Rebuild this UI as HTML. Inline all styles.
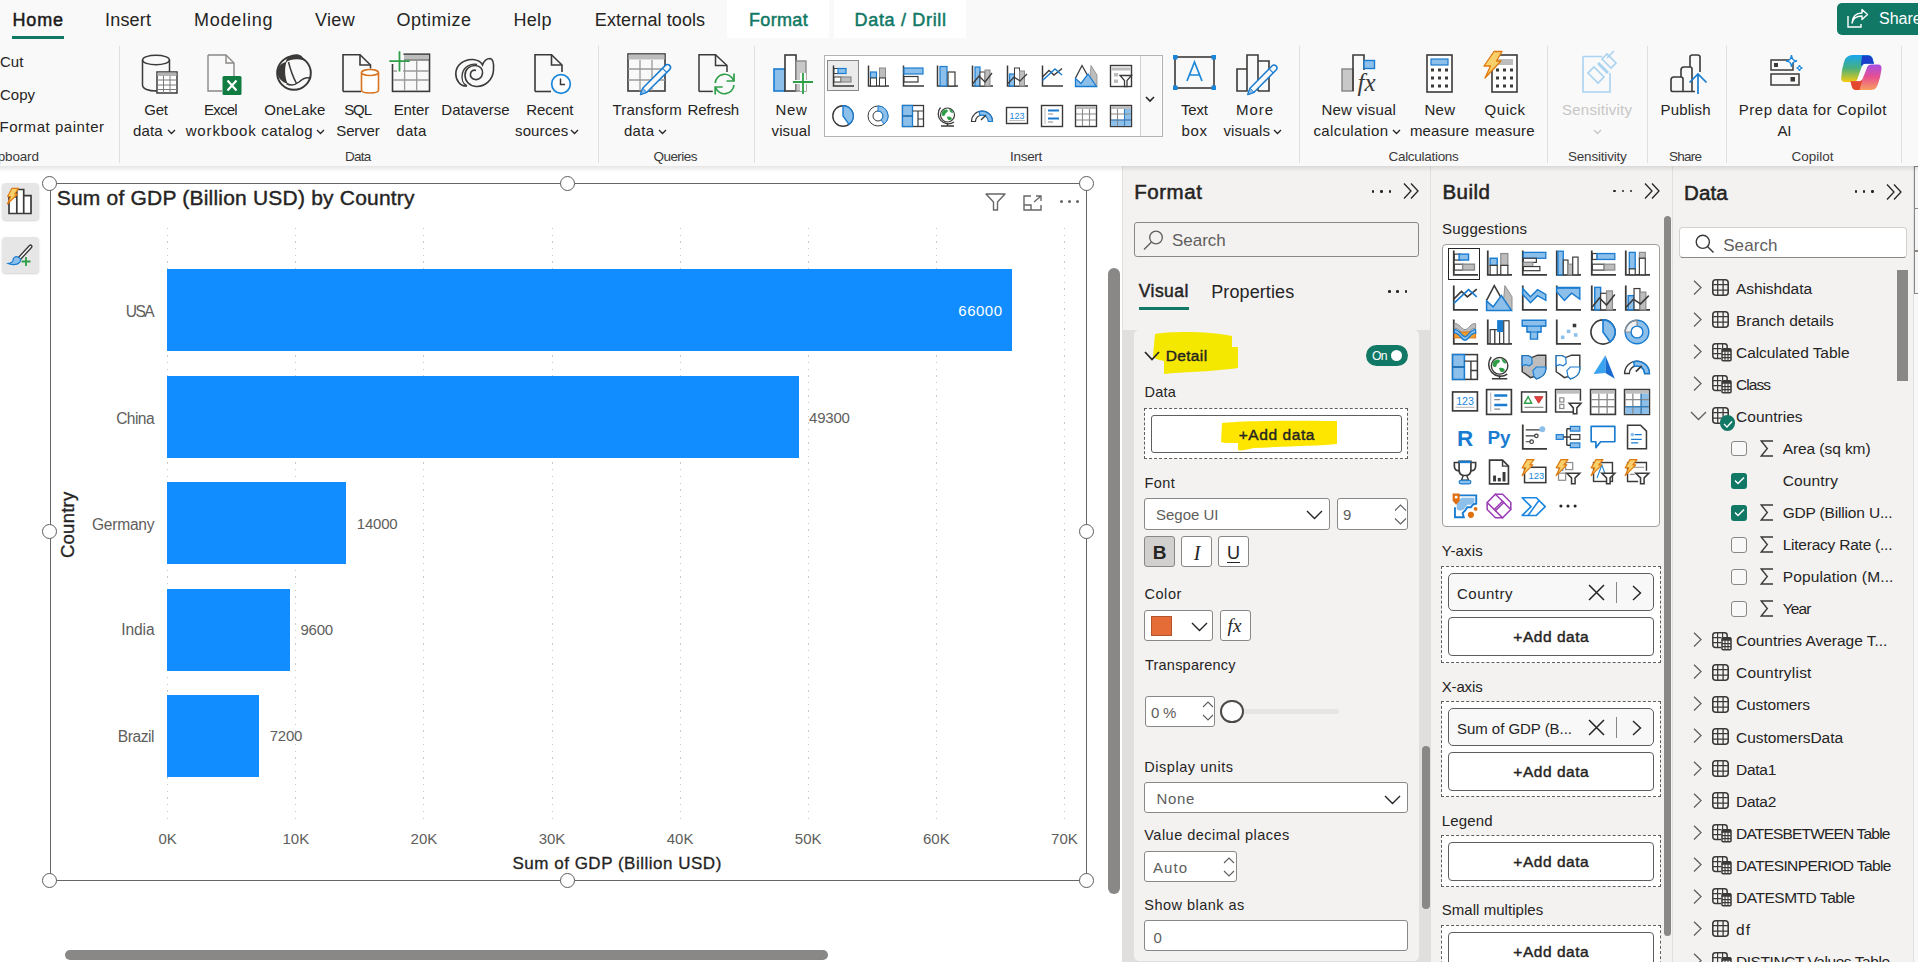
<!DOCTYPE html>
<html><head><meta charset="utf-8"><style>
html,body{margin:0;padding:0;width:1918px;height:962px;overflow:hidden;background:#fff}
body{position:relative;font-family:"Liberation Sans",sans-serif}
.a{position:absolute;box-sizing:border-box}
.t{position:absolute;white-space:nowrap;line-height:1}
svg.a{overflow:visible}
</style></head><body>
<div class="a" style="left:0.00px;top:0.00px;width:1918.00px;height:166.00px;background:#f9f9f9"></div>
<div class="a" style="left:0.00px;top:166.00px;width:1122.00px;height:796.00px;background:#ffffff"></div>
<div class="a" style="left:727.00px;top:0.00px;width:102.00px;height:38.00px;background:#ffffff"></div>
<div class="a" style="left:834.00px;top:0.00px;width:132.00px;height:38.00px;background:#ffffff"></div>
<div class="t" style="left:12.50px;top:10.66px;font-size:18.00px;color:#1b1a19;-webkit-text-stroke:0.49px #1b1a19;letter-spacing:0.829px">Home</div>
<div class="a" style="left:12.00px;top:36.00px;width:51.50px;height:2.50px;background:#117865"></div>
<div class="t" style="left:105.00px;top:10.66px;font-size:18.00px;color:#252423;letter-spacing:0.197px">Insert</div>
<div class="t" style="left:194.00px;top:10.66px;font-size:18.00px;color:#252423;letter-spacing:0.780px">Modeling</div>
<div class="t" style="left:315.00px;top:10.66px;font-size:18.00px;color:#252423;letter-spacing:0.337px">View</div>
<div class="t" style="left:396.50px;top:10.66px;font-size:18.00px;color:#252423;letter-spacing:0.484px">Optimize</div>
<div class="t" style="left:513.50px;top:10.66px;font-size:18.00px;color:#252423;letter-spacing:0.294px">Help</div>
<div class="t" style="left:594.80px;top:10.66px;font-size:18.00px;color:#252423;letter-spacing:0.096px">External tools</div>
<div class="t" style="left:749.00px;top:10.66px;font-size:18.00px;color:#117865;-webkit-text-stroke:0.49px #117865;letter-spacing:0.340px">Format</div>
<div class="t" style="left:854.60px;top:10.66px;font-size:18.00px;color:#117865;-webkit-text-stroke:0.49px #117865;letter-spacing:0.672px">Data / Drill</div>
<div class="a" style="left:1837.00px;top:3.00px;width:90.00px;height:32.00px;background:#117865;border-radius:5px"></div>
<svg class="a" style="left:1846.00px;top:8.00px" width="24" height="22" viewBox="0 0 24 22"><path d="M2 8 V19 H15 V16" fill="none" stroke="#fff" stroke-width="1.4"/><path d="M6 15 C7 10 11 8 16 8 V11.5 L21.5 6.5 L16 1.5 V5 C10 5 6.5 9 6 15Z" fill="none" stroke="#fff" stroke-width="1.4" stroke-linejoin="round"/></svg>
<div class="t" style="left:1879.00px;top:11.36px;font-size:16.00px;color:#ffffff">Share</div>
<div class="t" style="left:0.00px;top:54.00px;font-size:15.00px;color:#252423">Cut</div>
<div class="t" style="left:0.00px;top:87.00px;font-size:15.00px;color:#252423">Copy</div>
<div class="t" style="left:-0.50px;top:119.00px;font-size:15.00px;color:#252423;letter-spacing:0.536px">Format painter</div>
<div class="t" style="left:-2.30px;top:149.57px;font-size:13.50px;color:#3b3a39;letter-spacing:-0.166px">pboard</div>
<div class="a" style="left:118.50px;top:46.00px;width:1.00px;height:117.00px;background:#e1dfdd"></div>
<div class="a" style="left:598.30px;top:46.00px;width:1.00px;height:117.00px;background:#e1dfdd"></div>
<div class="a" style="left:753.60px;top:46.00px;width:1.00px;height:117.00px;background:#e1dfdd"></div>
<div class="a" style="left:1298.50px;top:46.00px;width:1.00px;height:117.00px;background:#e1dfdd"></div>
<div class="a" style="left:1547.40px;top:46.00px;width:1.00px;height:117.00px;background:#e1dfdd"></div>
<div class="a" style="left:1646.50px;top:46.00px;width:1.00px;height:117.00px;background:#e1dfdd"></div>
<div class="a" style="left:1725.50px;top:46.00px;width:1.00px;height:117.00px;background:#e1dfdd"></div>
<div class="a" style="left:1900.50px;top:46.00px;width:1.00px;height:117.00px;background:#e1dfdd"></div>
<div class="t" style="left:144.30px;top:101.80px;font-size:15.00px;color:#252423;letter-spacing:-0.238px">Get</div>
<div class="t" style="left:133.00px;top:123.10px;font-size:15.00px;color:#252423;letter-spacing:0.170px">data</div>
<svg class="a" style="left:166.50px;top:129.00px" width="9" height="6" viewBox="0 0 9 6"><path d="M1 1 L4.5 4.5 L8 1" fill="none" stroke="#252423" stroke-width="1.3"/></svg>
<div class="t" style="left:203.90px;top:101.80px;font-size:15.00px;color:#252423;letter-spacing:-0.720px">Excel</div>
<div class="t" style="left:185.70px;top:123.10px;font-size:15.00px;color:#252423;letter-spacing:0.844px">workbook</div>
<div class="t" style="left:264.30px;top:101.80px;font-size:15.00px;color:#252423;letter-spacing:0.021px">OneLake</div>
<div class="t" style="left:261.20px;top:123.10px;font-size:15.00px;color:#252423;letter-spacing:0.522px">catalog</div>
<svg class="a" style="left:316.00px;top:129.00px" width="9" height="6" viewBox="0 0 9 6"><path d="M1 1 L4.5 4.5 L8 1" fill="none" stroke="#252423" stroke-width="1.3"/></svg>
<div class="t" style="left:344.20px;top:101.80px;font-size:15.00px;color:#252423;letter-spacing:-1.107px">SQL</div>
<div class="t" style="left:336.30px;top:123.10px;font-size:15.00px;color:#252423;letter-spacing:-0.155px">Server</div>
<div class="t" style="left:393.70px;top:101.80px;font-size:15.00px;color:#252423;letter-spacing:-0.088px">Enter</div>
<div class="t" style="left:396.30px;top:123.10px;font-size:15.00px;color:#252423;letter-spacing:0.270px">data</div>
<div class="t" style="left:441.30px;top:101.80px;font-size:15.00px;color:#252423">Dataverse</div>
<div class="t" style="left:526.30px;top:101.80px;font-size:15.00px;color:#252423;letter-spacing:-0.105px">Recent</div>
<div class="t" style="left:515.00px;top:123.10px;font-size:15.00px;color:#252423;letter-spacing:0.130px">sources</div>
<svg class="a" style="left:570.00px;top:129.00px" width="9" height="6" viewBox="0 0 9 6"><path d="M1 1 L4.5 4.5 L8 1" fill="none" stroke="#252423" stroke-width="1.3"/></svg>
<div class="t" style="left:345.00px;top:149.57px;font-size:13.50px;color:#3b3a39;letter-spacing:-0.738px">Data</div>
<div class="t" style="left:612.40px;top:101.80px;font-size:15.00px;color:#252423;letter-spacing:0.202px">Transform</div>
<div class="t" style="left:624.00px;top:123.10px;font-size:15.00px;color:#252423;letter-spacing:0.270px">data</div>
<svg class="a" style="left:657.50px;top:129.00px" width="9" height="6" viewBox="0 0 9 6"><path d="M1 1 L4.5 4.5 L8 1" fill="none" stroke="#252423" stroke-width="1.3"/></svg>
<div class="t" style="left:687.60px;top:101.80px;font-size:15.00px;color:#252423;letter-spacing:-0.153px">Refresh</div>
<div class="t" style="left:653.40px;top:149.57px;font-size:13.50px;color:#3b3a39;letter-spacing:-0.511px">Queries</div>
<div class="t" style="left:775.50px;top:101.80px;font-size:15.00px;color:#252423;letter-spacing:0.646px">New</div>
<div class="t" style="left:771.50px;top:123.10px;font-size:15.00px;color:#252423;letter-spacing:0.130px">visual</div>
<div class="t" style="left:1010.00px;top:149.57px;font-size:13.50px;color:#3b3a39;letter-spacing:-0.292px">Insert</div>
<div class="t" style="left:1181.00px;top:101.80px;font-size:15.00px;color:#252423;letter-spacing:-0.170px">Text</div>
<div class="t" style="left:1181.60px;top:123.10px;font-size:15.00px;color:#252423;letter-spacing:0.609px">box</div>
<div class="t" style="left:1236.00px;top:101.80px;font-size:15.00px;color:#252423;letter-spacing:0.943px">More</div>
<div class="t" style="left:1223.50px;top:123.10px;font-size:15.00px;color:#252423;letter-spacing:0.109px">visuals</div>
<svg class="a" style="left:1273.00px;top:129.00px" width="9" height="6" viewBox="0 0 9 6"><path d="M1 1 L4.5 4.5 L8 1" fill="none" stroke="#252423" stroke-width="1.3"/></svg>
<div class="t" style="left:1321.50px;top:101.80px;font-size:15.00px;color:#252423;letter-spacing:0.197px">New visual</div>
<div class="t" style="left:1313.50px;top:123.10px;font-size:15.00px;color:#252423;letter-spacing:0.363px">calculation</div>
<svg class="a" style="left:1391.50px;top:129.00px" width="9" height="6" viewBox="0 0 9 6"><path d="M1 1 L4.5 4.5 L8 1" fill="none" stroke="#252423" stroke-width="1.3"/></svg>
<div class="t" style="left:1424.50px;top:101.80px;font-size:15.00px;color:#252423;letter-spacing:0.246px">New</div>
<div class="t" style="left:1410.00px;top:123.10px;font-size:15.00px;color:#252423;letter-spacing:0.108px">measure</div>
<div class="t" style="left:1484.60px;top:101.80px;font-size:15.00px;color:#252423;letter-spacing:0.515px">Quick</div>
<div class="t" style="left:1475.00px;top:123.10px;font-size:15.00px;color:#252423;letter-spacing:0.191px">measure</div>
<div class="t" style="left:1388.50px;top:149.57px;font-size:13.50px;color:#3b3a39;letter-spacing:-0.294px">Calculations</div>
<div class="t" style="left:1562.00px;top:101.80px;font-size:15.00px;color:#c8c6c4;letter-spacing:0.248px">Sensitivity</div>
<svg class="a" style="left:1592.50px;top:129.00px" width="9" height="6" viewBox="0 0 9 6"><path d="M1 1 L4.5 4.5 L8 1" fill="none" stroke="#c8c6c4" stroke-width="1.3"/></svg>
<div class="t" style="left:1568.00px;top:149.57px;font-size:13.50px;color:#3b3a39;letter-spacing:-0.197px">Sensitivity</div>
<div class="t" style="left:1660.60px;top:101.80px;font-size:15.00px;color:#252423;letter-spacing:0.117px">Publish</div>
<div class="t" style="left:1669.00px;top:149.57px;font-size:13.50px;color:#3b3a39;letter-spacing:-0.755px">Share</div>
<div class="t" style="left:1738.80px;top:101.80px;font-size:15.00px;color:#252423;letter-spacing:0.507px">Prep data for Copilot</div>
<div class="t" style="left:1777.50px;top:123.10px;font-size:15.00px;color:#252423;letter-spacing:-0.173px">AI</div>
<div class="t" style="left:1791.50px;top:149.57px;font-size:13.50px;color:#3b3a39">Copilot</div>
<div class="a" style="left:1913.00px;top:166.00px;width:5.00px;height:796.00px;background:#f8f8f8;border-left:1px solid #e1dfdd"></div>
<div class="a" style="left:1913.80px;top:166.20px;width:5.00px;height:43.00px;border:1.6px solid #8a8886;border-right:none;background:#f5f5f5"></div>
<div class="a" style="left:1913.80px;top:208.40px;width:5.00px;height:43.00px;border:1.6px solid #8a8886;border-right:none;background:#f5f5f5"></div>
<div class="a" style="left:1913.80px;top:251.30px;width:5.00px;height:43.00px;border:1.6px solid #8a8886;border-right:none;background:#f5f5f5"></div>
<svg class="a" style="left:141.00px;top:54.00px" width="37" height="41" viewBox="0 0 37 41"><path d="M1.5 6 V31 C1.5 35 8 37 15 37 L15 36" fill="none" stroke="#3b3a39" stroke-width="1.5"/><ellipse cx="15" cy="6" rx="13.5" ry="4.8" fill="none" stroke="#3b3a39" stroke-width="1.5"/><path d="M28.5 6 V18" fill="none" stroke="#3b3a39" stroke-width="1.5"/><rect x="16" y="18" width="20" height="21" fill="#fff" stroke="#3b3a39" stroke-width="1.5"/><rect x="16.5" y="18.5" width="19" height="3.5" fill="#b3b3b3"/><path d="M16 26 H36 M16 31 H36 M16 35.5 H36 M22.5 22 V39 M29 22 V39" stroke="#7a7a7a" stroke-width="1"/></svg>
<svg class="a" style="left:207.00px;top:54.00px" width="36" height="41" viewBox="0 0 36 41"><path d="M1 1 H19 L27 9 V23" fill="none" stroke="#8a8886" stroke-width="1.4"/><path d="M1 1 V37 H15" fill="none" stroke="#8a8886" stroke-width="1.4"/><path d="M19 1 V9 H27" fill="none" stroke="#8a8886" stroke-width="1.4"/><rect x="15.5" y="22" width="19" height="19" rx="1.5" fill="#107c41"/><path d="M20.5 26.5 L29.5 36.5 M29.5 26.5 L20.5 36.5" stroke="#fff" stroke-width="2.2"/></svg>
<svg class="a" style="left:276.00px;top:54.00px" width="37" height="38" viewBox="0 0 37 38"><circle cx="18" cy="19" r="16.8" fill="none" stroke="#3b3a39" stroke-width="2"/><path d="M9.5 8.5 C11 3 15 0.3 20 0.3 C24.5 0.3 27 2.5 27.8 6.5 C22 4.5 14.5 5 9.5 8.5 Z" fill="#3b3a39"/><path d="M1.5 17 C2.5 12 6 8.5 10.5 8 C8.5 14 8.5 22 11.5 29.5 C6 28.5 2 24 1.5 19 Z" fill="#3b3a39"/><path d="M12.5 8 C14.5 16 17 23 20.5 29.5" fill="none" stroke="#3b3a39" stroke-width="1.5"/><path d="M10.5 29.5 C14 31.5 18.5 31.5 23 28 C27 24.5 30.5 22.5 35 24.5" fill="none" stroke="#3b3a39" stroke-width="1.5"/></svg>
<svg class="a" style="left:342.00px;top:54.00px" width="39" height="41" viewBox="0 0 39 41"><path d="M1 37.5 V0.8 H18 L28.5 11 V14.5" fill="none" stroke="#3b3a39" stroke-width="1.6"/><path d="M18 0.8 V11 H28.5" fill="none" stroke="#3b3a39" stroke-width="1.6"/><path d="M1 37.5 H19" fill="none" stroke="#3b3a39" stroke-width="1.6"/><path d="M19.5 18.5 V36 C19.5 40 36.5 40 36.5 36 V18.5" fill="#fff" stroke="#d9741e" stroke-width="1.6"/><ellipse cx="28" cy="18.5" rx="8.5" ry="3" fill="#fff" stroke="#d9741e" stroke-width="1.6"/></svg>
<svg class="a" style="left:389.00px;top:51.00px" width="42" height="44" viewBox="0 0 42 44"><rect x="3.5" y="3.2" width="37" height="37.2" fill="none" stroke="#3b3a39" stroke-width="1.6"/><rect x="15" y="3.8" width="24.8" height="4.5" fill="#bdbdbd"/><path d="M15 9 H40" stroke="#3b3a39" stroke-width="1"/><path d="M4 20 H40 M4 29 H40 M15.6 9 V40 M27.7 9 V40" stroke="#9a9a9a" stroke-width="1.3"/><rect x="0" y="0" width="14.5" height="13" fill="#f9f9f9"/><rect x="8" y="0" width="6" height="21" fill="#f9f9f9"/><path d="M10.5 0.2 V20.6 M0.3 10.2 H20.7" stroke="#2e9e47" stroke-width="1.8"/></svg>
<svg class="a" style="left:455.00px;top:57.00px" width="40" height="31" viewBox="0 0 40 31"><path d="M12 29 C5 29.5 0.8 23 0.8 17 C0.8 8 9 2 18 2.5 C23 3 26 5 27.5 8 C29 4 32 1.5 35 1.5 C38 2 39 7 38.5 13 C38 23 30 30 21 29.5 C14 29 10 24 10 18 C10 12 15 8.5 20 8.5 C25 8.5 28 12 27.5 16.5 C27 21 23 23 20 22.5 C16.5 22 15 19 15.5 16.5 C16 13.5 19 12.5 21 13.5" fill="none" stroke="#3b3a39" stroke-width="1.6"/><path d="M12 29 C8 27 6 22 7.5 16 C9 10 16 6 22 7.5" fill="none" stroke="#3b3a39" stroke-width="1.4"/></svg>
<svg class="a" style="left:534.00px;top:54.00px" width="40" height="42" viewBox="0 0 40 42"><path d="M1 37.5 V0.8 H17.5 L28 11 V18" fill="none" stroke="#3b3a39" stroke-width="1.6"/><path d="M17.5 0.8 V11 H28" fill="none" stroke="#3b3a39" stroke-width="1.6"/><path d="M1 37.5 H17" fill="none" stroke="#3b3a39" stroke-width="1.6"/><circle cx="27" cy="30" r="9.3" fill="#fff" stroke="#1a86d9" stroke-width="1.7"/><path d="M26.5 24.5 V30.5 H31" fill="none" stroke="#3b3a39" stroke-width="1.5"/></svg>
<svg class="a" style="left:627.00px;top:53.00px" width="44" height="42" viewBox="0 0 44 42"><rect x="1" y="1" width="37" height="37" fill="none" stroke="#3b3a39" stroke-width="1.6"/><rect x="1.5" y="1.5" width="36" height="5" fill="#bdbdbd"/><path d="M1 16 H38 M1 27 H38 M13 7 V38 M25 7 V38" stroke="#9a9a9a" stroke-width="1.3"/><path d="M13.5 41.5 L15.7 35.2 L38.4 12.4 A2.9 2.9 0 0 1 42.6 16.6 L19.8 39.3 Z" fill="#f9f9f9" stroke="#1a7cd1" stroke-width="1.5" stroke-linejoin="round"/><path d="M13.5 41.5 L15.7 35.2 L19.8 39.3 Z" fill="#8cc0ea" stroke="#1a7cd1" stroke-width="1"/><path d="M39.7 19.4 L35.6 15.3" stroke="#1a7cd1" stroke-width="1.1"/></svg>
<svg class="a" style="left:698.00px;top:54.00px" width="40" height="42" viewBox="0 0 40 42"><path d="M1 37.4 V0.8 H17.5 L29 11.5 V18" fill="none" stroke="#3b3a39" stroke-width="1.5"/><path d="M17.5 0.8 V11.5 H29" fill="none" stroke="#3b3a39" stroke-width="1.5"/><path d="M1 37.4 H14.8" fill="none" stroke="#3b3a39" stroke-width="1.5"/><path d="M17.2 29 A9.5 9.5 0 0 1 35.6 26.5" fill="none" stroke="#2e9e47" stroke-width="1.7"/><path d="M36 19.5 V27 H28.5" fill="none" stroke="#2e9e47" stroke-width="1.7"/><path d="M36 31 A9.5 9.5 0 0 1 17.6 33.5" fill="none" stroke="#2e9e47" stroke-width="1.7"/><path d="M17.2 40.5 V33 H24.7" fill="none" stroke="#2e9e47" stroke-width="1.7"/></svg>
<svg class="a" style="left:773.00px;top:54.00px" width="40" height="42" viewBox="0 0 40 42"><rect x="1" y="15" width="11" height="22" fill="#8cc0ea" stroke="#1a7cd1" stroke-width="1.6"/><rect x="12" y="1" width="11" height="36" fill="#fff" stroke="#3b3a39" stroke-width="1.6"/><rect x="23" y="7" width="10" height="30" fill="#c8c8c8" stroke="#8a8a8a" stroke-width="1.4"/><rect x="20" y="26" width="20" height="4" fill="#f9f9f9"/><rect x="27" y="19" width="6" height="18" fill="#f9f9f9"/><path d="M30 19 V40 M20 28 H40" stroke="#2e9e47" stroke-width="1.8"/></svg>
<div class="a" style="left:823.50px;top:54.50px;width:339.00px;height:82.00px;background:#fff;border:1.5px solid #b3b3b3"></div>
<div class="a" style="left:1140.20px;top:55.50px;width:1.00px;height:80.00px;background:#d0d0d0"></div>
<div class="a" style="left:1141.20px;top:55.50px;width:20.00px;height:80.00px;background:#f9f9f9"></div>
<svg class="a" style="left:1145.00px;top:96.00px" width="10" height="7" viewBox="0 0 10 7"><path d="M1 1 L5 5 L9 1" fill="none" stroke="#252423" stroke-width="1.6"/></svg>
<div class="a" style="left:827.00px;top:60.30px;width:32.00px;height:31.20px;background:#ebebeb;border:1.2px solid #8a8886"></div>
<svg class="a" style="left:832.00px;top:65.00px" width="22" height="22" viewBox="0 0 22 22"><path d="M1.5 0.5 V21 H22" fill="none" stroke="#3b3a39" stroke-width="1.5"/><rect x="2" y="3.5" width="5" height="5" fill="#fff" stroke="#3b3a39" stroke-width="1"/><rect x="6" y="3.5" width="8" height="5" fill="#8cc0ea" stroke="#1a7cd1" stroke-width="1.2"/><rect x="2" y="12" width="7" height="5" fill="#fff" stroke="#3b3a39" stroke-width="1"/><rect x="9" y="12" width="10" height="5" fill="#bdbdbd" stroke="#8a8a8a" stroke-width="1.2"/></svg>
<svg class="a" style="left:866.75px;top:65.00px" width="22" height="22" viewBox="0 0 22 22"><path d="M1.5 0.5 V21 H22" fill="none" stroke="#3b3a39" stroke-width="1.5"/><rect x="3.5" y="7" width="6" height="6" fill="#8cc0ea" stroke="#1a7cd1" stroke-width="1.2"/><rect x="3.5" y="13" width="6" height="8" fill="#fff" stroke="#3b3a39" stroke-width="1"/><rect x="12.5" y="3" width="6" height="10" fill="#bdbdbd" stroke="#8a8a8a" stroke-width="1"/><rect x="12.5" y="13" width="6" height="8" fill="#fff" stroke="#3b3a39" stroke-width="1"/></svg>
<svg class="a" style="left:901.50px;top:65.00px" width="22" height="22" viewBox="0 0 22 22"><path d="M1.5 0.5 V21 H22" fill="none" stroke="#3b3a39" stroke-width="1.5"/><rect x="2" y="3" width="19" height="6" fill="#8cc0ea" stroke="#1a7cd1" stroke-width="1.2"/><rect x="2" y="11.5" width="14" height="5.5" fill="#fff" stroke="#3b3a39" stroke-width="1.2"/></svg>
<svg class="a" style="left:936.25px;top:65.00px" width="22" height="22" viewBox="0 0 22 22"><path d="M1.5 0.5 V21 H22" fill="none" stroke="#3b3a39" stroke-width="1.5"/><rect x="4" y="1.5" width="7" height="19.5" fill="#8cc0ea" stroke="#1a7cd1" stroke-width="1.2"/><rect x="12" y="7" width="7" height="14" fill="#fff" stroke="#3b3a39" stroke-width="1.2"/></svg>
<svg class="a" style="left:971.00px;top:65.00px" width="22" height="22" viewBox="0 0 22 22"><path d="M1.5 0.5 V21 H22" fill="none" stroke="#3b3a39" stroke-width="1.5"/><rect x="4" y="2" width="5" height="19" fill="#8cc0ea" stroke="#1a7cd1" stroke-width="1.2"/><rect x="9" y="7" width="5" height="14" fill="#fff" stroke="#3b3a39" stroke-width="1"/><rect x="14" y="5" width="5" height="16" fill="#bdbdbd" stroke="#8a8a8a" stroke-width="1"/><path d="M1.5 19 L8 11 L14 17 L21 8" fill="none" stroke="#3b3a39" stroke-width="1.3"/></svg>
<svg class="a" style="left:1005.75px;top:65.00px" width="22" height="22" viewBox="0 0 22 22"><path d="M1.5 0.5 V21 H22" fill="none" stroke="#3b3a39" stroke-width="1.5"/><rect x="3.5" y="9" width="5" height="12" fill="#8cc0ea" stroke="#1a7cd1" stroke-width="1.2"/><rect x="8.5" y="3" width="5" height="18" fill="#fff" stroke="#3b3a39" stroke-width="1"/><rect x="13.5" y="6" width="5" height="15" fill="#bdbdbd" stroke="#8a8a8a" stroke-width="1"/><path d="M1.5 19 L8 12 L14 16 L21 9" fill="none" stroke="#3b3a39" stroke-width="1.3"/></svg>
<svg class="a" style="left:1040.50px;top:65.00px" width="22" height="22" viewBox="0 0 22 22"><path d="M1.5 0.5 V21 H22" fill="none" stroke="#3b3a39" stroke-width="1.5"/><path d="M1.5 12 L8 5.5 L13 10 L21 3.5" fill="none" stroke="#3b3a39" stroke-width="1.4"/><path d="M1.5 15.5 L14 4 L21 10" fill="none" stroke="#1a7cd1" stroke-width="1.4"/></svg>
<svg class="a" style="left:1075.25px;top:65.00px" width="22" height="22" viewBox="0 0 22 22"><path d="M0.5 13 L7 0.5 L14 13" fill="#fff" stroke="#3b3a39" stroke-width="1.3"/><path d="M16 0.5 L22 10 V21.5 H14 Z" fill="#bdbdbd" stroke="#8a8a8a" stroke-width="0.8"/><path d="M0.5 21.5 V13.5 L6 18.5 L13 9 L21.5 21.5 Z" fill="#8cc0ea" stroke="#1a7cd1" stroke-width="1.3"/></svg>
<svg class="a" style="left:1110.00px;top:65.00px" width="22" height="22" viewBox="0 0 22 22"><rect x="0.5" y="0.5" width="21" height="21" fill="#fff" stroke="#3b3a39" stroke-width="1.4"/><rect x="1.5" y="2.5" width="19" height="3" fill="#bdbdbd"/><rect x="4" y="8" width="4" height="3.5" fill="#bdbdbd"/><rect x="4" y="14.5" width="4" height="3.5" fill="#bdbdbd"/><path d="M10 10.5 H21.5 L17 15.5 V21.5 H14.5 V15.5 Z" fill="#fff" stroke="#3b3a39" stroke-width="1.3"/></svg>
<svg class="a" style="left:832.00px;top:104.50px" width="22" height="22" viewBox="0 0 22 22"><circle cx="11" cy="11" r="10.2" fill="#fff" stroke="#3b3a39" stroke-width="1.4"/><path d="M11 0.8 A10.2 10.2 0 0 1 17 19.3 L11 11 Z" fill="#8cc0ea" stroke="#1a7cd1" stroke-width="1.4"/></svg>
<svg class="a" style="left:866.75px;top:104.50px" width="22" height="22" viewBox="0 0 22 22"><circle cx="11" cy="11" r="10" fill="none" stroke="#3b3a39" stroke-width="1"/><circle cx="11" cy="11" r="5" fill="none" stroke="#3b3a39" stroke-width="1"/><path d="M11 1 A10 10 0 0 1 17 19 L14 15 A5 5 0 0 0 11 6 Z" fill="#8cc0ea" stroke="#1a7cd1" stroke-width="1"/></svg>
<svg class="a" style="left:901.50px;top:104.50px" width="22" height="22" viewBox="0 0 22 22"><rect x="0.5" y="0.5" width="21" height="21" fill="#fff" stroke="#3b3a39" stroke-width="1.3"/><rect x="0.5" y="0.5" width="10" height="21" fill="#8cc0ea" stroke="#1a7cd1" stroke-width="1.3"/><path d="M0.5 11 H10.5 M10.5 6 H21.5 M16 6 V21.5 M16 14 H21.5" stroke="#3b3a39" stroke-width="1.2"/><path d="M0.5 11 H10.5" stroke="#1a7cd1" stroke-width="1.3"/></svg>
<svg class="a" style="left:936.25px;top:104.50px" width="22" height="22" viewBox="0 0 22 22"><circle cx="11.5" cy="10" r="7" fill="#fff" stroke="#3b3a39" stroke-width="1.2"/><path d="M6 7 C8 4 11 4 12 6 C11 8 9 8 9 10 C8 12 6 11 5.5 9 Z M13 4 C15 4 17 6 17 8 C15 8 14 7 13 4 Z M11 12 C13 11 16 12 16 14 C14 16 12 16 11 12 Z" fill="#2e9e47"/><path d="M4.5 2.5 A10 10 0 0 0 18 17" fill="none" stroke="#3b3a39" stroke-width="1.3"/><path d="M11.5 18 V20.5 M5 21 H18" stroke="#3b3a39" stroke-width="1.3"/></svg>
<svg class="a" style="left:971.00px;top:104.50px" width="22" height="22" viewBox="0 0 22 22"><path d="M0.5 16.5 A10.5 10.5 0 0 1 21.5 16.5 H17.5 A6.5 6.5 0 0 0 4.5 16.5 Z" fill="#fff" stroke="#3b3a39" stroke-width="1.2"/><path d="M8 6.6 A10.5 10.5 0 0 1 21.5 16.5 H17.5 A6.5 6.5 0 0 0 9 10.5 Z" fill="#8cc0ea" stroke="#1a7cd1" stroke-width="1.2"/><path d="M10 15 L15 10" stroke="#3b3a39" stroke-width="1.5"/></svg>
<svg class="a" style="left:1005.75px;top:104.50px" width="22" height="22" viewBox="0 0 22 22"><rect x="0.5" y="2.5" width="21" height="16" fill="#fff" stroke="#3b3a39" stroke-width="1.4"/><text x="11" y="13.5" text-anchor="middle" font-family="Liberation Sans" font-size="9" fill="#1a86d9">123</text><path d="M3 15.5 H19" stroke="#bdbdbd" stroke-width="1"/></svg>
<svg class="a" style="left:1040.50px;top:104.50px" width="22" height="22" viewBox="0 0 22 22"><rect x="0.5" y="0.5" width="21" height="21" fill="#fff" stroke="#3b3a39" stroke-width="1.4"/><path d="M4 3 V19" stroke="#bdbdbd" stroke-width="1"/><path d="M7 5.5 H18 M7 13.5 H18" stroke="#1a7cd1" stroke-width="2"/><path d="M7 9 H12 M7 17 H12" stroke="#8a8a8a" stroke-width="1"/></svg>
<svg class="a" style="left:1075.25px;top:104.50px" width="22" height="22" viewBox="0 0 22 22"><rect x="0.5" y="0.5" width="21" height="21" fill="#fff" stroke="#3b3a39" stroke-width="1.4"/><rect x="1" y="1" width="20" height="3" fill="#bdbdbd"/><path d="M1 9 H21 M1 15 H21 M7.5 4 V21 M14.5 4 V21" stroke="#8a8a8a" stroke-width="1.1"/></svg>
<svg class="a" style="left:1110.00px;top:104.50px" width="22" height="22" viewBox="0 0 22 22"><rect x="0.5" y="0.5" width="21" height="21" fill="#fff" stroke="#3b3a39" stroke-width="1.4"/><rect x="1" y="1" width="20" height="3" fill="#bdbdbd"/><rect x="14.5" y="4" width="6.5" height="17" fill="#8cc0ea"/><rect x="1" y="15" width="20" height="6" fill="#8cc0ea"/><path d="M1 9 H21 M1 15 H21 M7.5 4 V21 M14.5 4 V21" stroke="#8a8a8a" stroke-width="1.1"/><path d="M1 15 H21 M14.5 4 V21" stroke="#1a7cd1" stroke-width="0.8"/></svg>
<svg class="a" style="left:1173.00px;top:55.00px" width="43" height="36" viewBox="0 0 43 36"><rect x="2" y="2" width="39" height="31" fill="none" stroke="#3b3a39" stroke-width="1.6"/><rect x="0" y="0" width="4.5" height="4.5" fill="#1a86d9"/><rect x="38.5" y="0" width="4.5" height="4.5" fill="#1a86d9"/><rect x="0" y="30.5" width="4.5" height="4.5" fill="#1a86d9"/><rect x="38.5" y="30.5" width="4.5" height="4.5" fill="#1a86d9"/><path d="M14 26 L21.5 7 L29 26 M16.5 20 H26.5" fill="none" stroke="#1a86d9" stroke-width="1.7"/></svg>
<svg class="a" style="left:1236.00px;top:54.00px" width="41" height="42" viewBox="0 0 41 42"><path d="M1 37 V15 H11 V37 Z M11 37 V1 H22 V37 M22 7 H33 V37 H22" fill="none" stroke="#3b3a39" stroke-width="1.6"/><path d="M11.8 40.5 L14.0 34.2 L35.9 12.0 A2.9 2.9 0 0 1 40.1 16.0 L18.1 38.3 Z" fill="#f9f9f9" stroke="#1a7cd1" stroke-width="1.5" stroke-linejoin="round"/><path d="M11.8 40.5 L14.0 34.2 L18.1 38.3 Z" fill="#8cc0ea" stroke="#1a7cd1" stroke-width="1"/><path d="M37.2 18.9 L33.1 14.8" stroke="#1a7cd1" stroke-width="1.1"/></svg>
<svg class="a" style="left:1341.00px;top:54.00px" width="38" height="41" viewBox="0 0 38 41"><rect x="1" y="15" width="11" height="22" fill="#c8c8c8" stroke="#8a8a8a" stroke-width="1.5"/><path d="M12 37 V1 H23 V16" fill="none" stroke="#3b3a39" stroke-width="1.6"/><rect x="23" y="6.5" width="10.5" height="8" fill="#8cc0ea" stroke="#1a7cd1" stroke-width="1.4"/><text x="16.5" y="37" font-family="Liberation Serif" font-style="italic" font-size="25" fill="#3b3a39">fx</text></svg>
<svg class="a" style="left:1425.50px;top:53.50px" width="27" height="39" viewBox="0 0 27 39"><rect x="1" y="1" width="25" height="37" fill="#fff" stroke="#3b3a39" stroke-width="1.6"/><rect x="5" y="5" width="17" height="6" fill="#8cc0ea" stroke="#1a7cd1" stroke-width="1.2"/><g fill="#3b3a39"><rect x="5" y="14.5" width="3" height="3"/><rect x="12" y="14.5" width="3" height="3"/><rect x="19" y="14.5" width="3" height="3"/><rect x="5" y="22.5" width="3" height="3"/><rect x="12" y="22.5" width="3" height="3"/><rect x="19" y="22.5" width="3" height="3"/><rect x="5" y="30.5" width="3" height="3"/><rect x="12" y="30.5" width="3" height="3"/><rect x="19" y="30.5" width="3" height="3"/></g></svg>
<svg class="a" style="left:1483.00px;top:51.00px" width="35" height="42" viewBox="0 0 35 42"><rect x="9" y="4" width="25" height="37" fill="#fff" stroke="#3b3a39" stroke-width="1.6"/><rect x="13" y="8" width="17" height="6" fill="#bdbdbd"/><g fill="#3b3a39"><rect x="13" y="17.5" width="3" height="3"/><rect x="20" y="17.5" width="3" height="3"/><rect x="27" y="17.5" width="3" height="3"/><rect x="13" y="25.5" width="3" height="3"/><rect x="20" y="25.5" width="3" height="3"/><rect x="27" y="25.5" width="3" height="3"/><rect x="13" y="33.5" width="3" height="3"/><rect x="20" y="33.5" width="3" height="3"/><rect x="27" y="33.5" width="3" height="3"/></g><path d="M11 0.5 H19 L13.5 10 H18 L2 27 L7.5 15 H1 Z" fill="#f7cf6b" stroke="#e07a10" stroke-width="1.3" stroke-linejoin="round"/></svg>
<svg class="a" style="left:1582.00px;top:51.00px" width="37" height="42" viewBox="0 0 37 42"><path d="M1 5.5 H20 M1 5.5 V41 H28 V22" fill="none" stroke="#a9d3f0" stroke-width="1.6"/><path d="M6 22 L16 32 L22 26 L12 16 Z" fill="none" stroke="#a9d3f0" stroke-width="1.6"/><path d="M20 8 L29 17 L34 12 L25 3 Z M25 7 L32 0" fill="none" stroke="#a9d3f0" stroke-width="1.6"/><path d="M16 12 L26 22" stroke="#a9d3f0" stroke-width="3"/></svg>
<svg class="a" style="left:1670.00px;top:54.00px" width="37" height="41" viewBox="0 0 37 41"><path d="M1 36 V26 C1 24 2 23 4 23 H11 M11 23 V16 C11 14 12 13 14 13 H20 M20 13 V3 C20 1.5 21 1 22.5 1 H27.5 C29 1 30 1.5 30 3 V18" fill="none" stroke="#3b3a39" stroke-width="1.6"/><path d="M1 36 C1 37 2 37.5 3 37.5 H25" fill="none" stroke="#3b3a39" stroke-width="1.6"/><path d="M11 23 C12.5 23 13 24 13 25 V37 M20 13 C21.5 13 22 14 22 15 V37" fill="none" stroke="#3b3a39" stroke-width="1.6"/><path d="M28 40 V20 M19.5 28.5 L28 20 L36.5 28.5" fill="none" stroke="#1a7cd1" stroke-width="1.7"/></svg>
<svg class="a" style="left:1770.00px;top:54.00px" width="34" height="33" viewBox="0 0 34 33"><rect x="1" y="6" width="22" height="10" fill="none" stroke="#3b3a39" stroke-width="1.5"/><rect x="1" y="20" width="28" height="11" fill="none" stroke="#3b3a39" stroke-width="1.5"/><rect x="4" y="9" width="4" height="4" fill="#3b3a39"/><rect x="20.5" y="23" width="4.5" height="4.5" fill="#3b3a39"/><path d="M21.5 1 C22 5 23 6.5 27 7 C23 7.5 22 9 21.5 13 C21 9 20 7.5 16 7 C20 6.5 21 5 21.5 1Z" fill="#f9f9f9" stroke="#1a86d9" stroke-width="1.3"/><path d="M29.5 11 C29.8 13 30.5 13.7 32.5 14 C30.5 14.3 29.8 15 29.5 17 C29.2 15 28.5 14.3 26.5 14 C28.5 13.7 29.2 13 29.5 11Z" fill="#f9f9f9" stroke="#1a86d9" stroke-width="1.2"/></svg>
<svg class="a" style="left:1841.00px;top:55.00px" width="42" height="36" viewBox="0 0 42 36"><defs><linearGradient id="cpa" x1="0" y1="0" x2="0" y2="1"><stop offset="0" stop-color="#16a6f2"/><stop offset="0.5" stop-color="#4bb07a"/><stop offset="1" stop-color="#f5cc10"/></linearGradient><linearGradient id="cpb" x1="0" y1="0" x2="0" y2="1"><stop offset="0" stop-color="#a64ee6"/><stop offset="0.5" stop-color="#e8508e"/><stop offset="1" stop-color="#f8a060"/></linearGradient></defs><path d="M6 2 Q8 0 12 0 H27 Q30 0 31.5 3 L33 8.8 H24 Q22 8.8 21 11 L16 25 Q15 27 12 27 H4 Q0 27 0.2 23 Q0.7 14 3 7 Q4 3 6 2 Z" fill="url(#cpa)"/><path d="M21 0.5 H27 Q30 0.3 31.5 3.5 L33 8.8 H24 Q22 8.8 21 11 L20 10 Z" fill="#1a40cc"/><path d="M35 33 Q33.5 35 30 35 H15 Q12 35 11 32 L9.5 26.3 H18.5 Q20.5 26.3 21.5 24 L26.5 11.5 Q27.5 9.4 30.5 9.4 H37 Q41 9.4 40.5 14 Q39.5 22 37 29 Q36 31.5 35 33 Z" fill="url(#cpb)"/><path d="M9.5 26.3 H18.5 Q20.5 26.3 21.5 24 L18.5 35 H15 Q12 35 11 32 Z" fill="#e4482e"/></svg>
<div class="a" style="left:1.50px;top:183.00px;width:37.00px;height:37.00px;background:#e6e6e6;border-radius:4px;box-shadow:0 1px 2px rgba(0,0,0,0.18)"></div>
<div class="a" style="left:1.50px;top:236.70px;width:37.00px;height:36.60px;background:#e6e6e6;border-radius:4px;box-shadow:0 1px 2px rgba(0,0,0,0.18)"></div>
<svg class="a" style="left:8.00px;top:188.00px" width="24" height="26" viewBox="0 0 24 26"><path d="M1 25.5 V9 H8.8 V25.5 Z M8.8 25.5 V1.5 H15.7 V25.5 M15.7 25.5 V7.6 H23 V25.5 Z M1 25.5 H23" fill="#fff" stroke="#3b3a39" stroke-width="1.7"/><path d="M3.8 0.4 H10.6 L6.6 6 H9.6 L-0.6 16 L2.6 8.5 H-0.4 Z" fill="#f7cf6b" stroke="#e07a10" stroke-width="1.1" stroke-linejoin="round"/></svg>
<svg class="a" style="left:7.00px;top:243.00px" width="26" height="24" viewBox="0 0 26 24"><path d="M11 15 L22 3 C23 2 24 2 24.5 2.5 C25 3 25 4 24 5 L13 17" fill="#fff" stroke="#3b3a39" stroke-width="1.4"/><path d="M11 14 C8 13 6 15 6 17 C6 19 5 20 1 20.5 C4 22 10 22 12 20 C14 18 14 16 13 15.5 Z" fill="#8cc0ea" stroke="#1a7cd1" stroke-width="1.2"/><path d="M19 14 V23 M14.5 18.5 H23.5" stroke="#2e9e47" stroke-width="1.8"/></svg>
<div class="a" style="left:167.20px;top:228.00px;width:1.00px;height:596.00px;background:repeating-linear-gradient(#c8c8c8 0 1.3px,transparent 1.3px 6.7px)"></div>
<div class="a" style="left:295.30px;top:228.00px;width:1.00px;height:596.00px;background:repeating-linear-gradient(#c8c8c8 0 1.3px,transparent 1.3px 6.7px)"></div>
<div class="a" style="left:423.40px;top:228.00px;width:1.00px;height:596.00px;background:repeating-linear-gradient(#c8c8c8 0 1.3px,transparent 1.3px 6.7px)"></div>
<div class="a" style="left:551.50px;top:228.00px;width:1.00px;height:596.00px;background:repeating-linear-gradient(#c8c8c8 0 1.3px,transparent 1.3px 6.7px)"></div>
<div class="a" style="left:679.60px;top:228.00px;width:1.00px;height:596.00px;background:repeating-linear-gradient(#c8c8c8 0 1.3px,transparent 1.3px 6.7px)"></div>
<div class="a" style="left:807.70px;top:228.00px;width:1.00px;height:596.00px;background:repeating-linear-gradient(#c8c8c8 0 1.3px,transparent 1.3px 6.7px)"></div>
<div class="a" style="left:935.80px;top:228.00px;width:1.00px;height:596.00px;background:repeating-linear-gradient(#c8c8c8 0 1.3px,transparent 1.3px 6.7px)"></div>
<div class="a" style="left:1063.90px;top:228.00px;width:1.00px;height:596.00px;background:repeating-linear-gradient(#c8c8c8 0 1.3px,transparent 1.3px 6.7px)"></div>
<div class="a" style="left:167.00px;top:269.00px;width:845.46px;height:82.00px;background:#118dff"></div>
<div class="t" style="left:125.80px;top:303.79px;font-size:15.60px;color:#605e5c;letter-spacing:-1.639px">USA</div>
<div class="t" style="left:958.30px;top:303.30px;font-size:15.00px;color:#ffffff;letter-spacing:0.498px">66000</div>
<div class="a" style="left:167.00px;top:375.60px;width:631.53px;height:82.00px;background:#118dff"></div>
<div class="t" style="left:116.20px;top:410.79px;font-size:15.60px;color:#605e5c;letter-spacing:-0.589px">China</div>
<div class="t" style="left:809.03px;top:410.30px;font-size:15.00px;color:#605e5c;letter-spacing:-0.209px">49300</div>
<div class="a" style="left:167.00px;top:482.00px;width:179.34px;height:82.00px;background:#118dff"></div>
<div class="t" style="left:91.90px;top:516.69px;font-size:15.60px;color:#605e5c;letter-spacing:-0.241px">Germany</div>
<div class="t" style="left:356.84px;top:516.20px;font-size:15.00px;color:#605e5c;letter-spacing:-0.209px">14000</div>
<div class="a" style="left:167.00px;top:588.60px;width:122.98px;height:82.00px;background:#118dff"></div>
<div class="t" style="left:121.20px;top:622.39px;font-size:15.60px;color:#605e5c;letter-spacing:-0.106px">India</div>
<div class="t" style="left:300.48px;top:621.90px;font-size:15.00px;color:#605e5c;letter-spacing:-0.222px">9600</div>
<div class="a" style="left:167.00px;top:695.00px;width:92.23px;height:82.00px;background:#118dff"></div>
<div class="t" style="left:117.80px;top:728.59px;font-size:15.60px;color:#605e5c;letter-spacing:-0.441px">Brazil</div>
<div class="t" style="left:269.73px;top:728.10px;font-size:15.00px;color:#605e5c;letter-spacing:-0.222px">7200</div>
<div class="t" style="left:158.53px;top:831.30px;font-size:15.00px;color:#605e5c">0K</div>
<div class="t" style="left:282.46px;top:831.30px;font-size:15.00px;color:#605e5c">10K</div>
<div class="t" style="left:410.56px;top:831.30px;font-size:15.00px;color:#605e5c">20K</div>
<div class="t" style="left:538.66px;top:831.30px;font-size:15.00px;color:#605e5c">30K</div>
<div class="t" style="left:666.76px;top:831.30px;font-size:15.00px;color:#605e5c">40K</div>
<div class="t" style="left:794.86px;top:831.30px;font-size:15.00px;color:#605e5c">50K</div>
<div class="t" style="left:922.96px;top:831.30px;font-size:15.00px;color:#605e5c">60K</div>
<div class="t" style="left:1051.06px;top:831.30px;font-size:15.00px;color:#605e5c">70K</div>
<div class="t" style="left:512.50px;top:855.01px;font-size:17.00px;color:#252423;letter-spacing:0.508px;-webkit-text-stroke:0.3px #252423">Sum of GDP (Billion USD)</div>
<div class="t" style="left:0.00px;top:-15.66px;font-size:18.50px;color:#252423;letter-spacing:0.238px;transform-origin:0 0;transform:translate(74.3px,558px) rotate(-90deg) translate(0,-15.66px);left:0;top:0;-webkit-text-stroke:0.35px #252423">Country</div>
<div class="t" style="left:56.70px;top:187.02px;font-size:21.00px;color:#252423;letter-spacing:0.204px;-webkit-text-stroke:0.4px #252423">Sum of GDP (Billion USD) by Country</div>
<div class="a" style="left:50.00px;top:183.00px;width:1037.00px;height:697.50px;border:1.3px solid #666"></div>
<div class="a" style="left:42.00px;top:175.50px;width:15.00px;height:15.00px;background:#fff;border:1.3px solid #605e5c;border-radius:50%"></div>
<div class="a" style="left:560.00px;top:175.50px;width:15.00px;height:15.00px;background:#fff;border:1.3px solid #605e5c;border-radius:50%"></div>
<div class="a" style="left:1079.00px;top:175.50px;width:15.00px;height:15.00px;background:#fff;border:1.3px solid #605e5c;border-radius:50%"></div>
<div class="a" style="left:42.00px;top:524.00px;width:15.00px;height:15.00px;background:#fff;border:1.3px solid #605e5c;border-radius:50%"></div>
<div class="a" style="left:1079.00px;top:524.00px;width:15.00px;height:15.00px;background:#fff;border:1.3px solid #605e5c;border-radius:50%"></div>
<div class="a" style="left:42.00px;top:873.00px;width:15.00px;height:15.00px;background:#fff;border:1.3px solid #605e5c;border-radius:50%"></div>
<div class="a" style="left:560.00px;top:873.00px;width:15.00px;height:15.00px;background:#fff;border:1.3px solid #605e5c;border-radius:50%"></div>
<div class="a" style="left:1079.00px;top:873.00px;width:15.00px;height:15.00px;background:#fff;border:1.3px solid #605e5c;border-radius:50%"></div>
<svg class="a" style="left:985.00px;top:192.50px" width="21" height="18" viewBox="0 0 21 18"><path d="M1 1 H20 L12.5 9 V17 H8.5 V9 Z" fill="none" stroke="#666" stroke-width="1.4" stroke-linejoin="round"/></svg>
<svg class="a" style="left:1023.00px;top:194.50px" width="19" height="16" viewBox="0 0 19 16"><path d="M8 1 H1 V15 H18 V10 M1 10 H8 V15" fill="none" stroke="#666" stroke-width="1.4"/><path d="M11 7 L18 1 M13 1 H18 V6" fill="none" stroke="#666" stroke-width="1.3"/></svg>
<div class="a" style="left:1059.70px;top:199.70px;width:3.00px;height:3.00px;background:#666;border-radius:50%"></div>
<div class="a" style="left:1068.00px;top:199.70px;width:3.00px;height:3.00px;background:#666;border-radius:50%"></div>
<div class="a" style="left:1075.90px;top:199.70px;width:3.00px;height:3.00px;background:#666;border-radius:50%"></div>
<div class="a" style="left:1108.00px;top:268.40px;width:11.50px;height:625.50px;background:#8a8886;border-radius:6px"></div>
<div class="a" style="left:64.60px;top:949.60px;width:763.00px;height:10.40px;background:#8a8886;border-radius:5px"></div>
<div class="a" style="left:1122.00px;top:166.00px;width:308.50px;height:796.00px;background:#f3f2f1;border-left:1px solid #e1dfdd"></div>
<div class="t" style="left:1134.20px;top:182.25px;font-size:20.50px;color:#252423;-webkit-text-stroke:0.55px #252423;letter-spacing:0.556px">Format</div>
<div class="a" style="left:1371.70px;top:190.20px;width:2.60px;height:2.60px;background:#252423;border-radius:50%"></div><div class="a" style="left:1380.10px;top:190.20px;width:2.60px;height:2.60px;background:#252423;border-radius:50%"></div><div class="a" style="left:1388.50px;top:190.20px;width:2.60px;height:2.60px;background:#252423;border-radius:50%"></div>
<svg class="a" style="left:1403.00px;top:183.30px" width="16" height="16" viewBox="0 0 16 16"><path d="M1 0.5 L8 8 L1 15.5 M8 0.5 L15 8 L8 15.5" fill="none" stroke="#252423" stroke-width="1.3"/></svg>
<div class="a" style="left:1133.70px;top:221.50px;width:285.00px;height:35.00px;border:1px solid #8a8886;border-radius:3px"></div>
<svg class="a" style="left:1143.00px;top:230.00px" width="21" height="20" viewBox="0 0 21 20"><circle cx="13" cy="7.5" r="6.3" fill="none" stroke="#605e5c" stroke-width="1.3"/><path d="M8.5 12 L1 19.5" stroke="#605e5c" stroke-width="1.4"/></svg>
<div class="t" style="left:1172.00px;top:232.41px;font-size:17.00px;color:#605e5c;letter-spacing:-0.032px">Search</div>
<div class="t" style="left:1138.80px;top:283.09px;font-size:17.50px;color:#252423;-webkit-text-stroke:0.47px #252423;letter-spacing:0.431px">Visual</div>
<div class="a" style="left:1139.00px;top:307.30px;width:50.00px;height:2.70px;background:#117865"></div>
<div class="t" style="left:1211.20px;top:282.66px;font-size:18.00px;color:#252423;letter-spacing:0.108px">Properties</div>
<div class="a" style="left:1388.00px;top:290.10px;width:2.60px;height:2.60px;background:#252423;border-radius:50%"></div><div class="a" style="left:1396.40px;top:290.10px;width:2.60px;height:2.60px;background:#252423;border-radius:50%"></div><div class="a" style="left:1404.80px;top:290.10px;width:2.60px;height:2.60px;background:#252423;border-radius:50%"></div>
<div class="a" style="left:1123.00px;top:329.50px;width:296.00px;height:633.00px;background:#e1dfdd"></div>
<div class="a" style="left:1133.70px;top:329.70px;width:285.40px;height:631.00px;background:#f3f2f1;border-radius:5px"></div>
<div class="a" style="left:1419.00px;top:329.50px;width:10.50px;height:633.00px;background:#e1dfdd"></div>
<div class="a" style="left:1422.00px;top:746.00px;width:7.50px;height:163.00px;background:#8a8886;border-radius:4px"></div>
<svg class="a" style="left:1150.00px;top:330.00px" width="92" height="46" viewBox="0 0 92 46"><path d="M5 4 C20 1 60 1 82 6 V17 H88 V38 C60 42 30 42 14 44 V31 C8 30 4 28 3 26 Z" fill="#f5e800"/></svg>
<svg class="a" style="left:1144.30px;top:350.90px" width="16" height="10" viewBox="0 0 16 10"><path d="M1 1 L8 8.5 L15 1" fill="none" stroke="#252423" stroke-width="1.7"/></svg>
<div class="t" style="left:1165.70px;top:347.58px;font-size:15.50px;color:#252423;-webkit-text-stroke:0.42px #252423;letter-spacing:0.355px">Detail</div>
<div class="a" style="left:1365.60px;top:344.90px;width:42.20px;height:21.10px;background:#117865;border-radius:11px"></div>
<div class="t" style="left:1372.00px;top:350.27px;font-size:12.20px;color:#fff;letter-spacing:-0.774px">On</div>
<div class="a" style="left:1391.00px;top:350.10px;width:11.00px;height:11.00px;background:#fff;border-radius:50%"></div>
<div class="t" style="left:1144.60px;top:385.43px;font-size:14.50px;color:#252423;letter-spacing:0.224px">Data</div>
<div class="a" style="left:1144.30px;top:407.80px;width:263.50px;height:51.70px;border:1px dashed #605e5c;background:#fff"></div>
<div class="a" style="left:1151.00px;top:414.60px;width:250.50px;height:38.90px;border:1.3px solid #605e5c;border-radius:3px;background:#fff"></div>
<svg class="a" style="left:1220.00px;top:420.00px" width="118" height="31" viewBox="0 0 118 31"><path d="M2 3 C30 0 80 1 117 1 V24 C100 26 70 26 34 28 C25 30 20 31 18 30 V23 C8 23 2 23 1 22 Z" fill="#ffe600"/></svg>
<div class="t" style="left:1238.70px;top:426.78px;font-size:15.50px;color:#252423;-webkit-text-stroke:0.42px #252423;letter-spacing:0.575px">+Add data</div>
<div class="t" style="left:1144.40px;top:475.53px;font-size:14.50px;color:#252423;letter-spacing:0.496px">Font</div>
<div class="a" style="left:1144.40px;top:498.30px;width:186.10px;height:31.30px;border:1px solid #8a8886;border-radius:3px;background:#fff"></div>
<div class="t" style="left:1156.00px;top:506.90px;font-size:15.00px;color:#605e5c">Segoe UI</div>
<svg class="a" style="left:1305.50px;top:509.50px" width="17" height="10" viewBox="0 0 17 10"><path d="M1 1 L8.5 8.5 L16 1" fill="none" stroke="#252423" stroke-width="1.4"/></svg>
<div class="a" style="left:1337.20px;top:498.20px;width:70.50px;height:31.40px;border:1px solid #8a8886;border-radius:3px;background:#fff"></div>
<div class="t" style="left:1342.90px;top:507.30px;font-size:15.00px;color:#605e5c">9</div>
<svg class="a" style="left:1393.50px;top:503.50px" width="13" height="21" viewBox="0 0 13 21"><path d="M1 6.5 L6.5 1 L12 6.5 M1 14.5 L6.5 20 L12 14.5" fill="none" stroke="#605e5c" stroke-width="1.1"/></svg>
<div class="a" style="left:1144.40px;top:535.70px;width:30.30px;height:31.30px;border:1px solid #8a8886;border-radius:3px;background:#d2d0ce"></div>
<div class="t" style="left:1152.64px;top:543.42px;font-size:19.00px;color:#252423;font-weight:700">B</div>
<div class="a" style="left:1180.80px;top:535.70px;width:31.50px;height:31.30px;border:1px solid #8a8886;border-radius:3px;background:#fff"></div>
<div class="t" style="left:1193.72px;top:542.57px;font-size:20.00px;color:#252423;font-family:'Liberation Serif';font-style:italic">I</div>
<div class="a" style="left:1218.30px;top:535.70px;width:30.30px;height:31.30px;border:1px solid #8a8886;border-radius:3px;background:#fff"></div>
<div class="t" style="left:1227.00px;top:543.76px;font-size:18.00px;color:#252423">U</div>
<div class="a" style="left:1227.00px;top:561.50px;width:13.00px;height:1.30px;background:#252423"></div>
<div class="t" style="left:1144.40px;top:587.43px;font-size:14.50px;color:#252423;letter-spacing:0.588px">Color</div>
<div class="a" style="left:1144.40px;top:610.00px;width:68.80px;height:31.30px;border:1px solid #8a8886;border-radius:3px;background:#fff"></div>
<div class="a" style="left:1150.50px;top:615.60px;width:21.40px;height:20.60px;background:#e66c37;border:1px solid #b5532a"></div>
<svg class="a" style="left:1190.50px;top:622.00px" width="17" height="10" viewBox="0 0 17 10"><path d="M1 1 L8.5 8.5 L16 1" fill="none" stroke="#252423" stroke-width="1.4"/></svg>
<div class="a" style="left:1219.60px;top:610.00px;width:31.00px;height:31.30px;border:1px solid #8a8886;border-radius:3px;background:#fff"></div>
<div class="t" style="left:1227.61px;top:615.92px;font-size:19.00px;color:#252423;font-family:'Liberation Serif';font-style:italic">fx</div>
<div class="t" style="left:1145.00px;top:657.73px;font-size:14.50px;color:#252423;letter-spacing:0.218px">Transparency</div>
<div class="a" style="left:1144.60px;top:696.00px;width:70.90px;height:31.20px;border:1px solid #8a8886;border-radius:3px;background:#fff"></div>
<div class="t" style="left:1150.90px;top:705.00px;font-size:15.00px;color:#605e5c;letter-spacing:-0.173px">0 %</div>
<svg class="a" style="left:1201.50px;top:701.00px" width="12" height="20" viewBox="0 0 12 20"><path d="M1 6 L6 1 L11 6 M1 14 L6 19 L11 14" fill="none" stroke="#605e5c" stroke-width="1.1"/></svg>
<div class="a" style="left:1243.00px;top:708.50px;width:96.00px;height:5.50px;background:#e6e5e4;border-radius:3px"></div>
<div class="a" style="left:1220.20px;top:699.60px;width:23.40px;height:23.40px;background:#fff;border:2.6px solid #4a4a4a;border-radius:50%"></div>
<div class="t" style="left:1144.30px;top:759.73px;font-size:14.50px;color:#252423;letter-spacing:0.542px">Display units</div>
<div class="a" style="left:1144.30px;top:781.50px;width:263.50px;height:31.30px;border:1px solid #8a8886;border-radius:3px;background:#fff"></div>
<div class="t" style="left:1156.40px;top:790.80px;font-size:15.00px;color:#605e5c;letter-spacing:0.714px">None</div>
<svg class="a" style="left:1383.50px;top:794.50px" width="17" height="10" viewBox="0 0 17 10"><path d="M1 1 L8.5 8.5 L16 1" fill="none" stroke="#252423" stroke-width="1.4"/></svg>
<div class="t" style="left:1144.30px;top:828.03px;font-size:14.50px;color:#252423;letter-spacing:0.477px">Value decimal places</div>
<div class="a" style="left:1144.30px;top:851.40px;width:92.50px;height:30.80px;border:1px solid #8a8886;border-radius:3px;background:#fff"></div>
<div class="t" style="left:1153.00px;top:859.60px;font-size:15.00px;color:#605e5c;letter-spacing:1.048px">Auto</div>
<svg class="a" style="left:1222.50px;top:856.50px" width="12" height="20" viewBox="0 0 12 20"><path d="M1 6 L6 1 L11 6 M1 14 L6 19 L11 14" fill="none" stroke="#605e5c" stroke-width="1.1"/></svg>
<div class="t" style="left:1144.30px;top:898.13px;font-size:14.50px;color:#252423;letter-spacing:0.475px">Show blank as</div>
<div class="a" style="left:1144.30px;top:920.30px;width:263.50px;height:30.90px;border:1px solid #8a8886;border-radius:3px;background:#fff"></div>
<div class="t" style="left:1153.50px;top:930.10px;font-size:15.00px;color:#605e5c">0</div>
<div class="a" style="left:1430.00px;top:166.00px;width:241.50px;height:796.00px;background:#f3f2f1;border-left:1px solid #e1dfdd"></div>
<div class="t" style="left:1442.40px;top:182.35px;font-size:20.50px;color:#252423;-webkit-text-stroke:0.55px #252423;letter-spacing:0.504px">Build</div>
<div class="a" style="left:1613.10px;top:189.90px;width:2.60px;height:2.60px;background:#252423;border-radius:50%"></div><div class="a" style="left:1621.50px;top:189.90px;width:2.60px;height:2.60px;background:#252423;border-radius:50%"></div><div class="a" style="left:1629.90px;top:189.90px;width:2.60px;height:2.60px;background:#252423;border-radius:50%"></div>
<svg class="a" style="left:1644.40px;top:183.00px" width="16" height="16" viewBox="0 0 16 16"><path d="M1 0.5 L8 8 L1 15.5 M8 0.5 L15 8 L8 15.5" fill="none" stroke="#252423" stroke-width="1.3"/></svg>
<div class="t" style="left:1442.00px;top:220.50px;font-size:15.00px;color:#252423;letter-spacing:0.245px">Suggestions</div>
<div class="a" style="left:1442.00px;top:243.60px;width:218.00px;height:283.50px;background:#fff;border:1px solid #a19f9d;border-radius:4px"></div>
<div class="a" style="left:1448.00px;top:248.00px;width:32.00px;height:32.00px;border:1.3px solid #252423"></div>
<svg class="a" style="left:1451.50px;top:249.50px" width="26" height="26" viewBox="0 0 22 22"><path d="M1.5 0.5 V21 H22" fill="none" stroke="#3b3a39" stroke-width="1.5"/><rect x="2" y="3.5" width="5" height="5" fill="#fff" stroke="#3b3a39" stroke-width="1"/><rect x="6" y="3.5" width="8" height="5" fill="#8cc0ea" stroke="#1a7cd1" stroke-width="1.2"/><rect x="2" y="12" width="7" height="5" fill="#fff" stroke="#3b3a39" stroke-width="1"/><rect x="9" y="12" width="10" height="5" fill="#bdbdbd" stroke="#8a8a8a" stroke-width="1.2"/></svg>
<svg class="a" style="left:1486.00px;top:249.50px" width="26" height="26" viewBox="0 0 22 22"><path d="M1.5 0.5 V21 H22" fill="none" stroke="#3b3a39" stroke-width="1.5"/><rect x="3.5" y="7" width="6" height="6" fill="#8cc0ea" stroke="#1a7cd1" stroke-width="1.2"/><rect x="3.5" y="13" width="6" height="8" fill="#fff" stroke="#3b3a39" stroke-width="1"/><rect x="12.5" y="3" width="6" height="10" fill="#bdbdbd" stroke="#8a8a8a" stroke-width="1"/><rect x="12.5" y="13" width="6" height="8" fill="#fff" stroke="#3b3a39" stroke-width="1"/></svg>
<svg class="a" style="left:1520.60px;top:249.50px" width="26" height="26" viewBox="0 0 22 22"><path d="M1.5 0.5 V21 H22" fill="none" stroke="#3b3a39" stroke-width="1.5"/><rect x="2" y="2" width="19" height="5" fill="#8cc0ea" stroke="#1a7cd1" stroke-width="1.1"/><rect x="2" y="7" width="11" height="3.5" fill="#fff" stroke="#3b3a39" stroke-width="1"/><rect x="2" y="10.5" width="8" height="3.5" fill="#bdbdbd" stroke="#8a8a8a" stroke-width="1"/><rect x="2" y="14" width="14" height="3.5" fill="#fff" stroke="#3b3a39" stroke-width="1"/></svg>
<svg class="a" style="left:1555.20px;top:249.50px" width="26" height="26" viewBox="0 0 22 22"><path d="M1.5 0.5 V21 H22" fill="none" stroke="#3b3a39" stroke-width="1.5"/><rect x="2.5" y="1" width="4.5" height="20" fill="#8cc0ea" stroke="#1a7cd1" stroke-width="1.1"/><rect x="7" y="8.5" width="4" height="12.5" fill="#fff" stroke="#3b3a39" stroke-width="1"/><rect x="11" y="12" width="4" height="9" fill="#bdbdbd" stroke="#8a8a8a" stroke-width="1"/><rect x="15" y="6" width="4.5" height="15" fill="#fff" stroke="#3b3a39" stroke-width="1"/></svg>
<svg class="a" style="left:1589.80px;top:249.50px" width="26" height="26" viewBox="0 0 22 22"><path d="M1.5 0.5 V21 H22" fill="none" stroke="#3b3a39" stroke-width="1.5"/><rect x="2" y="3" width="4" height="5" fill="#fff" stroke="#3b3a39" stroke-width="1"/><rect x="6" y="3" width="15" height="5" fill="#8cc0ea" stroke="#1a7cd1" stroke-width="1.1"/><rect x="2" y="12" width="10" height="5" fill="#fff" stroke="#3b3a39" stroke-width="1"/><rect x="12" y="12" width="9" height="5" fill="#bdbdbd" stroke="#8a8a8a" stroke-width="1"/></svg>
<svg class="a" style="left:1624.40px;top:249.50px" width="26" height="26" viewBox="0 0 22 22"><path d="M1.5 0.5 V21 H22" fill="none" stroke="#3b3a39" stroke-width="1.5"/><rect x="4.5" y="2" width="5" height="14" fill="#8cc0ea" stroke="#1a7cd1" stroke-width="1.1"/><rect x="4.5" y="16" width="5" height="5" fill="#fff" stroke="#3b3a39" stroke-width="1"/><rect x="13" y="2" width="5" height="5" fill="#bdbdbd" stroke="#8a8a8a" stroke-width="1"/><rect x="13" y="7" width="5" height="14" fill="#fff" stroke="#3b3a39" stroke-width="1"/></svg>
<svg class="a" style="left:1451.50px;top:284.50px" width="26" height="26" viewBox="0 0 22 22"><path d="M1.5 0.5 V21 H22" fill="none" stroke="#3b3a39" stroke-width="1.5"/><path d="M1.5 12 L8 5.5 L13 10 L21 3.5" fill="none" stroke="#3b3a39" stroke-width="1.4"/><path d="M1.5 15.5 L14 4 L21 10" fill="none" stroke="#1a7cd1" stroke-width="1.4"/></svg>
<svg class="a" style="left:1486.00px;top:284.50px" width="26" height="26" viewBox="0 0 22 22"><path d="M0.5 13 L7 0.5 L14 13" fill="#fff" stroke="#3b3a39" stroke-width="1.3"/><path d="M16 0.5 L22 10 V21.5 H14 Z" fill="#bdbdbd" stroke="#8a8a8a" stroke-width="0.8"/><path d="M0.5 21.5 V13.5 L6 18.5 L13 9 L21.5 21.5 Z" fill="#8cc0ea" stroke="#1a7cd1" stroke-width="1.3"/></svg>
<svg class="a" style="left:1520.60px;top:284.50px" width="26" height="26" viewBox="0 0 22 22"><path d="M1.5 0.5 V21 H22" fill="none" stroke="#3b3a39" stroke-width="1.5"/><path d="M1.5 3 L8 10 L14 4 L21 8 V13 L14 9 L8 15 L1.5 8 Z" fill="#8cc0ea" stroke="#1a7cd1" stroke-width="1.2"/></svg>
<svg class="a" style="left:1555.20px;top:284.50px" width="26" height="26" viewBox="0 0 22 22"><path d="M1.5 0.5 V21 H22" fill="none" stroke="#3b3a39" stroke-width="1.5"/><path d="M1.5 2 H21 V12 L14 7 L8 13 L1.5 6 Z" fill="#8cc0ea" stroke="#1a7cd1" stroke-width="1.2"/><path d="M1.5 2.5 H21" stroke="#1a7cd1" stroke-width="1.5"/></svg>
<svg class="a" style="left:1589.80px;top:284.50px" width="26" height="26" viewBox="0 0 22 22"><path d="M1.5 0.5 V21 H22" fill="none" stroke="#3b3a39" stroke-width="1.5"/><rect x="4" y="2" width="5" height="19" fill="#8cc0ea" stroke="#1a7cd1" stroke-width="1.2"/><rect x="9" y="7" width="5" height="14" fill="#fff" stroke="#3b3a39" stroke-width="1"/><rect x="14" y="5" width="5" height="16" fill="#bdbdbd" stroke="#8a8a8a" stroke-width="1"/><path d="M1.5 19 L8 11 L14 17 L21 8" fill="none" stroke="#3b3a39" stroke-width="1.3"/></svg>
<svg class="a" style="left:1624.40px;top:284.50px" width="26" height="26" viewBox="0 0 22 22"><path d="M1.5 0.5 V21 H22" fill="none" stroke="#3b3a39" stroke-width="1.5"/><rect x="3.5" y="9" width="5" height="12" fill="#8cc0ea" stroke="#1a7cd1" stroke-width="1.2"/><rect x="8.5" y="3" width="5" height="18" fill="#fff" stroke="#3b3a39" stroke-width="1"/><rect x="13.5" y="6" width="5" height="15" fill="#bdbdbd" stroke="#8a8a8a" stroke-width="1"/><path d="M1.5 19 L8 12 L14 16 L21 9" fill="none" stroke="#3b3a39" stroke-width="1.3"/></svg>
<svg class="a" style="left:1451.50px;top:319.30px" width="26" height="26" viewBox="0 0 22 22"><path d="M1.5 0.5 V21 H22" fill="none" stroke="#3b3a39" stroke-width="1.5"/><path d="M2 4 C6 3 8 9 11 9 C14 9 16 3 20 4 V8 C16 7 14 13 11 13 C8 13 6 7 2 8 Z" fill="#bdbdbd" stroke="#8a8a8a" stroke-width="0.8"/><rect x="2" y="11" width="18" height="5" fill="#f0a030" stroke="#e07010" stroke-width="0.8"/><path d="M2 9 C6 8 8 15 11 15 C14 15 16 8 20 9 V12 C16 11 14 18 11 18 C8 18 6 11 2 12 Z" fill="#8cc0ea" stroke="#1a7cd1" stroke-width="1.1"/></svg>
<svg class="a" style="left:1486.00px;top:319.30px" width="26" height="26" viewBox="0 0 22 22"><path d="M1.5 0.5 V21 H22" fill="none" stroke="#3b3a39" stroke-width="1.5"/><rect x="3.5" y="9" width="4" height="12" fill="#fff" stroke="#3b3a39" stroke-width="1"/><rect x="7.5" y="9" width="4" height="12" fill="#fff" stroke="#3b3a39" stroke-width="1"/><rect x="10" y="1.5" width="4" height="9" fill="#1a7cd1" stroke="#1a7cd1" stroke-width="1.1"/><rect x="15" y="1.5" width="4.5" height="19.5" fill="#fff" stroke="#3b3a39" stroke-width="1"/></svg>
<svg class="a" style="left:1520.60px;top:319.30px" width="26" height="26" viewBox="0 0 22 22"><path d="M1 1 H21 V6 H17 V11 H14 V17 H8 V11 H5 V6 H1 Z" fill="#8cc0ea" stroke="#1a7cd1" stroke-width="1.2"/><path d="M1 6 H21 M5 11 H17" stroke="#1a7cd1" stroke-width="1"/></svg>
<svg class="a" style="left:1555.20px;top:319.30px" width="26" height="26" viewBox="0 0 22 22"><path d="M1.5 0.5 V21 H22" fill="none" stroke="#3b3a39" stroke-width="1.5"/><rect x="5" y="14" width="3" height="3" fill="#8cc0ea"/><rect x="10" y="9" width="3" height="3" fill="#8cc0ea"/><rect x="15" y="4" width="3" height="3" fill="#3b3a39"/><rect x="16" y="12" width="3" height="3" fill="#8cc0ea"/></svg>
<svg class="a" style="left:1589.80px;top:319.30px" width="26" height="26" viewBox="0 0 22 22"><circle cx="11" cy="11" r="10.2" fill="#fff" stroke="#3b3a39" stroke-width="1.4"/><path d="M11 0.8 A10.2 10.2 0 0 1 17 19.3 L11 11 Z" fill="#8cc0ea" stroke="#1a7cd1" stroke-width="1.4"/></svg>
<svg class="a" style="left:1624.40px;top:319.30px" width="26" height="26" viewBox="0 0 22 22"><circle cx="11" cy="11" r="7.5" fill="none" stroke="#f0f0f0" stroke-width="5"/><path d="M11 3.5 A7.5 7.5 0 1 1 3.5 11" fill="none" stroke="#8cc0ea" stroke-width="5"/><circle cx="11" cy="11" r="10" fill="none" stroke="#1a7cd1" stroke-width="1.2"/><circle cx="11" cy="11" r="5" fill="#fff" stroke="#1a7cd1" stroke-width="1.2"/><path d="M11 1 V6 M1 11 H6" stroke="#8a8a8a" stroke-width="1"/><path d="M11 1 A10 10 0 0 0 1 11" fill="none" stroke="#8a8a8a" stroke-width="1.2"/></svg>
<svg class="a" style="left:1451.50px;top:354.10px" width="26" height="26" viewBox="0 0 22 22"><rect x="0.5" y="0.5" width="21" height="21" fill="#fff" stroke="#3b3a39" stroke-width="1.3"/><rect x="0.5" y="0.5" width="10" height="21" fill="#8cc0ea" stroke="#1a7cd1" stroke-width="1.3"/><path d="M0.5 11 H10.5 M10.5 6 H21.5 M16 6 V21.5 M16 14 H21.5" stroke="#3b3a39" stroke-width="1.2"/><path d="M0.5 11 H10.5" stroke="#1a7cd1" stroke-width="1.3"/></svg>
<svg class="a" style="left:1486.00px;top:354.10px" width="26" height="26" viewBox="0 0 22 22"><circle cx="11.5" cy="10" r="7" fill="#fff" stroke="#3b3a39" stroke-width="1.2"/><path d="M6 7 C8 4 11 4 12 6 C11 8 9 8 9 10 C8 12 6 11 5.5 9 Z M13 4 C15 4 17 6 17 8 C15 8 14 7 13 4 Z M11 12 C13 11 16 12 16 14 C14 16 12 16 11 12 Z" fill="#2e9e47"/><path d="M4.5 2.5 A10 10 0 0 0 18 17" fill="none" stroke="#3b3a39" stroke-width="1.3"/><path d="M11.5 18 V20.5 M5 21 H18" stroke="#3b3a39" stroke-width="1.3"/></svg>
<svg class="a" style="left:1520.60px;top:354.10px" width="26" height="26" viewBox="0 0 22 22"><path d="M1 1.5 H6 L9 3 L14 1 H21 V12 C21 17 17 20 13 21 L11 19 L8 20 L4 17 L1 15 Z" fill="#bdbdbd" stroke="#3b3a39" stroke-width="1.2"/><path d="M1 1.5 H6 L9 3 L9.5 8 L7 10 L4 9 L1 10 Z" fill="#8cc0ea" stroke="#1a7cd1" stroke-width="1"/><path d="M10 14 L13 11 H21 V12 C21 17 17 20 13 21 L11 19 Z" fill="#8cc0ea" stroke="#1a7cd1" stroke-width="1"/></svg>
<svg class="a" style="left:1555.20px;top:354.10px" width="26" height="26" viewBox="0 0 22 22"><path d="M1 1.5 H6 L9 3 L14 1 H21 V12 C21 17 17 20 13 21 L11 19 L8 20 L4 17 L1 15 Z" fill="#fff" stroke="#3b3a39" stroke-width="1.2"/><path d="M1 1.5 H6 L9 3 L9.5 8 L7 10 L4 9 L1 10 Z" fill="#fff" stroke="#1a7cd1" stroke-width="1"/><path d="M10 14 L13 11 H21 V12 C21 17 17 20 13 21 L11 19 Z" fill="#fff" stroke="#1a7cd1" stroke-width="1"/></svg>
<svg class="a" style="left:1589.80px;top:354.10px" width="26" height="26" viewBox="0 0 22 22"><path d="M13 1 L21 21 L13 16 Z" fill="#1a6bd1"/><path d="M13 1 L3 17 L13 16 Z" fill="#39a3f0"/></svg>
<svg class="a" style="left:1624.40px;top:354.10px" width="26" height="26" viewBox="0 0 22 22"><path d="M0.5 16.5 A10.5 10.5 0 0 1 21.5 16.5 H17.5 A6.5 6.5 0 0 0 4.5 16.5 Z" fill="#fff" stroke="#3b3a39" stroke-width="1.2"/><path d="M8 6.6 A10.5 10.5 0 0 1 21.5 16.5 H17.5 A6.5 6.5 0 0 0 9 10.5 Z" fill="#8cc0ea" stroke="#1a7cd1" stroke-width="1.2"/><path d="M10 15 L15 10" stroke="#3b3a39" stroke-width="1.5"/></svg>
<svg class="a" style="left:1451.50px;top:388.90px" width="26" height="26" viewBox="0 0 22 22"><rect x="0.5" y="2.5" width="21" height="16" fill="#fff" stroke="#3b3a39" stroke-width="1.4"/><text x="11" y="13.5" text-anchor="middle" font-family="Liberation Sans" font-size="9" fill="#1a86d9">123</text><path d="M3 15.5 H19" stroke="#bdbdbd" stroke-width="1"/></svg>
<svg class="a" style="left:1486.00px;top:388.90px" width="26" height="26" viewBox="0 0 22 22"><rect x="0.5" y="0.5" width="21" height="21" fill="#fff" stroke="#3b3a39" stroke-width="1.4"/><path d="M4 3 V19" stroke="#bdbdbd" stroke-width="1"/><path d="M7 5.5 H18 M7 13.5 H18" stroke="#1a7cd1" stroke-width="2"/><path d="M7 9 H12 M7 17 H12" stroke="#8a8a8a" stroke-width="1"/></svg>
<svg class="a" style="left:1520.60px;top:388.90px" width="26" height="26" viewBox="0 0 22 22"><rect x="0.5" y="2.5" width="21" height="17" fill="#fff" stroke="#3b3a39" stroke-width="1.3"/><path d="M3 12 L6 6.5 L9 12 Z" fill="#fff" stroke="#2e9e47" stroke-width="1.2"/><path d="M11.5 6.5 H18.5 L15 12 Z" fill="#e84040" stroke="#c03030" stroke-width="0.8"/><path d="M3 15.5 H19" stroke="#8a8a8a" stroke-width="1"/></svg>
<svg class="a" style="left:1555.20px;top:388.90px" width="26" height="26" viewBox="0 0 22 22"><path d="M16 19.5 H0.5 V0.5 H21.5 V10" fill="#fff" stroke="#3b3a39" stroke-width="1.3"/><rect x="1" y="1" width="20" height="3" fill="#bdbdbd"/><rect x="4" y="7.5" width="3.5" height="3.5" fill="#fff" stroke="#8a8a8a" stroke-width="1"/><rect x="4" y="13" width="3.5" height="3.5" fill="#fff" stroke="#8a8a8a" stroke-width="1"/><path d="M12 12 H22 L18.5 16 V21 H15.5 V16 Z" fill="#fff" stroke="#3b3a39" stroke-width="1.3"/></svg>
<svg class="a" style="left:1589.80px;top:388.90px" width="26" height="26" viewBox="0 0 22 22"><rect x="0.5" y="0.5" width="21" height="21" fill="#fff" stroke="#3b3a39" stroke-width="1.4"/><rect x="1" y="1" width="20" height="3" fill="#bdbdbd"/><path d="M1 9 H21 M1 15 H21 M7.5 4 V21 M14.5 4 V21" stroke="#8a8a8a" stroke-width="1.1"/></svg>
<svg class="a" style="left:1624.40px;top:388.90px" width="26" height="26" viewBox="0 0 22 22"><rect x="0.5" y="0.5" width="21" height="21" fill="#fff" stroke="#3b3a39" stroke-width="1.4"/><rect x="1" y="1" width="20" height="3" fill="#bdbdbd"/><rect x="14.5" y="4" width="6.5" height="17" fill="#8cc0ea"/><rect x="1" y="15" width="20" height="6" fill="#8cc0ea"/><path d="M1 9 H21 M1 15 H21 M7.5 4 V21 M14.5 4 V21" stroke="#8a8a8a" stroke-width="1.1"/><path d="M1 15 H21 M14.5 4 V21" stroke="#1a7cd1" stroke-width="0.8"/></svg>
<svg class="a" style="left:1451.50px;top:423.70px" width="26" height="26" viewBox="0 0 22 22"><text x="11" y="19" text-anchor="middle" font-family="Liberation Sans" font-weight="bold" font-size="19" fill="#1a7cd1">R</text></svg>
<svg class="a" style="left:1486.00px;top:423.70px" width="26" height="26" viewBox="0 0 22 22"><text x="11" y="17" text-anchor="middle" font-family="Liberation Sans" font-weight="bold" font-size="16" fill="#1a7cd1">Py</text></svg>
<svg class="a" style="left:1520.60px;top:423.70px" width="26" height="26" viewBox="0 0 22 22"><path d="M1.5 0.5 V21 H22" fill="none" stroke="#3b3a39" stroke-width="1.5"/><path d="M4 5 H17 M4 10 H12 M4 15 H8" stroke="#3b3a39" stroke-width="1"/><circle cx="18" cy="4.5" r="2.5" fill="#8cc0ea"/><circle cx="13" cy="10" r="1.5" fill="none" stroke="#3b3a39"/><circle cx="9" cy="15" r="1.5" fill="none" stroke="#3b3a39"/></svg>
<svg class="a" style="left:1555.20px;top:423.70px" width="26" height="26" viewBox="0 0 22 22"><rect x="1" y="9" width="6" height="4" fill="#8cc0ea" stroke="#1a7cd1"/><rect x="13" y="2" width="8" height="4" fill="#8cc0ea" stroke="#1a7cd1"/><rect x="13" y="9" width="8" height="4" fill="#fff" stroke="#3b3a39"/><rect x="13" y="16" width="8" height="4" fill="#8cc0ea" stroke="#1a7cd1"/><path d="M7 11 H10 M10 4 V18 M10 4 H13 M10 11 H13 M10 18 H13" stroke="#3b3a39" stroke-width="1.2" fill="none"/></svg>
<svg class="a" style="left:1589.80px;top:423.70px" width="26" height="26" viewBox="0 0 22 22"><path d="M1 2 H21 V15 H9 L5 20 V15 H1 Z" fill="#fff" stroke="#1a7cd1" stroke-width="1.4" stroke-linejoin="round"/></svg>
<svg class="a" style="left:1624.40px;top:423.70px" width="26" height="26" viewBox="0 0 22 22"><path d="M3 1 H14 L19 6 V21 H3 Z" fill="#fff" stroke="#3b3a39" stroke-width="1.3"/><circle cx="7" cy="9" r="1.5" fill="#8cc0ea"/><path d="M9 9 H15 M6 13 H15 M6 16 H12" stroke="#1a7cd1" stroke-width="1.1"/></svg>
<svg class="a" style="left:1451.50px;top:458.50px" width="26" height="26" viewBox="0 0 22 22"><path d="M6 2 H16 V9 C16 13 13 14 11 14 C9 14 6 13 6 9 Z" fill="#fff" stroke="#3b3a39" stroke-width="1.4"/><path d="M6 3 H2 V6 C2 9 4 10 6 10 M16 3 H20 V6 C20 9 18 10 16 10" fill="none" stroke="#3b3a39" stroke-width="1.4"/><path d="M6 2.5 H16" stroke="#1a7cd1" stroke-width="2"/><path d="M9.5 14 L8 18 H14 L12.5 14" fill="none" stroke="#3b3a39" stroke-width="1.2"/><rect x="6" y="18" width="10" height="3" rx="1.5" fill="#8cc0ea" stroke="#1a7cd1"/></svg>
<svg class="a" style="left:1486.00px;top:458.50px" width="26" height="26" viewBox="0 0 22 22"><path d="M3 1 H14 L19 6 V21 H3 Z" fill="#fff" stroke="#3b3a39" stroke-width="1.4"/><path d="M14 1 V6 H19" fill="none" stroke="#3b3a39" stroke-width="1.2"/><rect x="6" y="14" width="2.5" height="5" fill="#3b3a39"/><rect x="10" y="16" width="2.5" height="3" fill="#3b3a39"/><rect x="14" y="11" width="2.5" height="8" fill="#3b3a39"/></svg>
<svg class="a" style="left:1520.60px;top:458.50px" width="26" height="26" viewBox="0 0 22 22"><rect x="3" y="7" width="18" height="13" fill="#fff" stroke="#3b3a39" stroke-width="1.3"/><text x="13" y="17" text-anchor="middle" font-family="Liberation Sans" font-size="8" fill="#1a86d9">123</text><path d="M5 0.5 H11 L7.5 5 H10 L1 14 L4 7.5 H1 Z" fill="#f7cf6b" stroke="#e07a10" stroke-width="1" stroke-linejoin="round"/></svg>
<svg class="a" style="left:1555.20px;top:458.50px" width="26" height="26" viewBox="0 0 22 22"><rect x="9" y="3" width="6" height="6" fill="#fff" stroke="#8a8a8a"/><rect x="3" y="12" width="6" height="6" fill="#fff" stroke="#8a8a8a"/><rect x="3" y="7" width="4" height="3" fill="#1a7cd1"/><path d="M10 12 H21 L17 16 V21 H14 V16 Z" fill="#fff" stroke="#3b3a39" stroke-width="1.3"/><path d="M5 0.5 H11 L7.5 5 H10 L1 14 L4 7.5 H1 Z" fill="#f7cf6b" stroke="#e07a10" stroke-width="1" stroke-linejoin="round"/></svg>
<svg class="a" style="left:1589.80px;top:458.50px" width="26" height="26" viewBox="0 0 22 22"><rect x="3" y="3" width="16" height="16" fill="#fff" stroke="#3b3a39" stroke-width="1.2"/><path d="M6 16 L10 5 L14 16" fill="none" stroke="#1a86d9" stroke-width="1"/><path d="M10 12 H21 L17 16 V21 H14 V16 Z" fill="#fff" stroke="#3b3a39" stroke-width="1.3"/><path d="M5 0.5 H11 L7.5 5 H10 L1 14 L4 7.5 H1 Z" fill="#f7cf6b" stroke="#e07a10" stroke-width="1" stroke-linejoin="round"/></svg>
<svg class="a" style="left:1624.40px;top:458.50px" width="26" height="26" viewBox="0 0 22 22"><path d="M3 3 H19 V10 M3 3 V19 H12" fill="none" stroke="#3b3a39" stroke-width="1.2"/><path d="M8 7 H17 M5 13 H9" stroke="#8a8a8a"/><path d="M10 12 H21 L17 16 V21 H14 V16 Z" fill="#fff" stroke="#3b3a39" stroke-width="1.3"/><path d="M5 0.5 H11 L7.5 5 H10 L1 14 L4 7.5 H1 Z" fill="#f7cf6b" stroke="#e07a10" stroke-width="1" stroke-linejoin="round"/></svg>
<svg class="a" style="left:1451.50px;top:493.30px" width="26" height="26" viewBox="0 0 22 22"><path d="M6 2 H20.5 V9 L18 9.5 L16 12 L13 12 L11 15 L9 17 L10 20.5 H2.5 V12" fill="none" stroke="#1a7cd1" stroke-width="1.6"/><path d="M8 4 H19 V8 L16 10 L13 10 L10 14 L7 15 L4 14 V8 Z" fill="#8cc0ea"/><path d="M0.5 0.5 H6.5 V6.5 L3.5 10 L0.5 6.5 Z" fill="#e07010"/><circle cx="3.5" cy="3.5" r="1.2" fill="#fff"/><circle cx="20" cy="13.5" r="1.6" fill="#e07010"/><circle cx="16" cy="18.5" r="2.6" fill="#e07010"/></svg>
<svg class="a" style="left:1486.00px;top:493.30px" width="26" height="26" viewBox="0 0 22 22"><path d="M8 1 L15 8 L8 15 L1 8 Z" fill="none" stroke="#9b3fb5" stroke-width="1.3"/><path d="M14 7 L21 14 L14 21 L7 14 Z" fill="none" stroke="#9b3fb5" stroke-width="1.3"/><path d="M8 1 L14 1 L21 8 L21 14 M1 8 L1 14 L8 21 L14 21" fill="none" stroke="#9b3fb5" stroke-width="1.3"/></svg>
<svg class="a" style="left:1520.60px;top:493.30px" width="26" height="26" viewBox="0 0 22 22"><path d="M1 4 H13 L20.5 11.5 L13 19 H1 L8.5 11.5 Z" fill="none" stroke="#1a86e0" stroke-width="1.4" stroke-linejoin="round"/><path d="M6 19 L15 6.5" fill="none" stroke="#1a86e0" stroke-width="1.3"/></svg>
<svg class="a" style="left:1555.20px;top:493.30px" width="26" height="26" viewBox="0 0 22 22"><circle cx="5" cy="11" r="1.3" fill="#252423"/><circle cx="11" cy="11" r="1.3" fill="#252423"/><circle cx="17" cy="11" r="1.3" fill="#252423"/></svg>
<div class="a" style="left:1664.20px;top:216.30px;width:6.80px;height:720.00px;background:#8a8886;border-radius:4px"></div>
<div class="t" style="left:1441.70px;top:543.30px;font-size:15.00px;color:#252423;letter-spacing:0.140px">Y-axis</div>
<div class="t" style="left:1441.70px;top:678.60px;font-size:15.00px;color:#252423;letter-spacing:-0.135px">X-axis</div>
<div class="t" style="left:1441.70px;top:812.90px;font-size:15.00px;color:#252423;letter-spacing:0.190px">Legend</div>
<div class="t" style="left:1441.70px;top:901.90px;font-size:15.00px;color:#252423;letter-spacing:0.046px">Small multiples</div>
<div class="a" style="left:1441.40px;top:566.40px;width:219.60px;height:96.30px;border:1px dashed #605e5c;background:#fff"></div>
<div class="a" style="left:1448.20px;top:572.60px;width:205.60px;height:38.80px;border:1.3px solid #605e5c;border-radius:5px;background:#f8f8f8"></div><div class="t" style="left:1457.00px;top:585.90px;font-size:15.00px;color:#252423;letter-spacing:0.480px">Country</div><svg class="a" style="left:1587.50px;top:584.10px" width="17" height="17" viewBox="0 0 17 17"><path d="M1 1 L16 16 M16 1 L1 16" stroke="#252423" stroke-width="1.5"/></svg><div class="a" style="left:1615.50px;top:582.10px;width:1.20px;height:21.00px;background:#8a8886"></div><svg class="a" style="left:1632.00px;top:585.10px" width="10" height="16" viewBox="0 0 10 16"><path d="M1 1 L8.5 8 L1 15" fill="none" stroke="#252423" stroke-width="1.4"/></svg>
<div class="a" style="left:1448.20px;top:617.40px;width:205.60px;height:38.80px;border:1.3px solid #605e5c;border-radius:4px;background:#fff"></div><div class="t" style="left:1513.30px;top:629.18px;font-size:15.50px;color:#252423;-webkit-text-stroke:0.42px #252423;letter-spacing:0.537px">+Add data</div>
<div class="a" style="left:1441.40px;top:700.50px;width:219.60px;height:96.70px;border:1px dashed #605e5c;background:#fff"></div>
<div class="a" style="left:1448.20px;top:707.60px;width:205.60px;height:38.40px;border:1.3px solid #605e5c;border-radius:5px;background:#f8f8f8"></div><div class="t" style="left:1457.00px;top:720.90px;font-size:15.00px;color:#252423;letter-spacing:-0.039px">Sum of GDP (B...</div><svg class="a" style="left:1587.50px;top:719.10px" width="17" height="17" viewBox="0 0 17 17"><path d="M1 1 L16 16 M16 1 L1 16" stroke="#252423" stroke-width="1.5"/></svg><div class="a" style="left:1615.50px;top:717.10px;width:1.20px;height:21.00px;background:#8a8886"></div><svg class="a" style="left:1632.00px;top:720.10px" width="10" height="16" viewBox="0 0 10 16"><path d="M1 1 L8.5 8 L1 15" fill="none" stroke="#252423" stroke-width="1.4"/></svg>
<div class="a" style="left:1448.20px;top:752.40px;width:205.60px;height:38.30px;border:1.3px solid #605e5c;border-radius:4px;background:#fff"></div><div class="t" style="left:1513.30px;top:763.93px;font-size:15.50px;color:#252423;-webkit-text-stroke:0.42px #252423;letter-spacing:0.537px">+Add data</div>
<div class="a" style="left:1441.40px;top:834.90px;width:219.60px;height:52.50px;border:1px dashed #605e5c;background:#fff"></div>
<div class="a" style="left:1448.20px;top:842.00px;width:205.60px;height:38.60px;border:1.3px solid #605e5c;border-radius:4px;background:#fff"></div><div class="t" style="left:1513.30px;top:853.68px;font-size:15.50px;color:#252423;-webkit-text-stroke:0.42px #252423;letter-spacing:0.537px">+Add data</div>
<div class="a" style="left:1441.40px;top:925.00px;width:219.60px;height:55.00px;border:1px dashed #605e5c;background:#fff"></div>
<div class="a" style="left:1448.20px;top:932.20px;width:205.60px;height:38.80px;border:1.3px solid #605e5c;border-radius:4px;background:#fff"></div><div class="t" style="left:1513.30px;top:943.98px;font-size:15.50px;color:#252423;-webkit-text-stroke:0.42px #252423;letter-spacing:0.537px">+Add data</div>
<div class="a" style="left:1671.50px;top:166.00px;width:241.50px;height:796.00px;background:#f3f2f1;border-left:1px solid #e1dfdd"></div>
<div class="t" style="left:1684.00px;top:182.65px;font-size:20.50px;color:#252423;-webkit-text-stroke:0.55px #252423;letter-spacing:0.133px">Data</div>
<div class="a" style="left:1854.50px;top:190.30px;width:2.60px;height:2.60px;background:#252423;border-radius:50%"></div><div class="a" style="left:1862.90px;top:190.30px;width:2.60px;height:2.60px;background:#252423;border-radius:50%"></div><div class="a" style="left:1871.30px;top:190.30px;width:2.60px;height:2.60px;background:#252423;border-radius:50%"></div>
<svg class="a" style="left:1886.00px;top:183.50px" width="16" height="16" viewBox="0 0 16 16"><path d="M1 0.5 L8 8 L1 15.5 M8 0.5 L15 8 L8 15.5" fill="none" stroke="#252423" stroke-width="1.3"/></svg>
<div class="a" style="left:1678.70px;top:227.40px;width:228.00px;height:31.00px;background:#fff;border:1px solid #d2d0ce;border-bottom:1.5px solid #8a8886;border-radius:4px"></div>
<svg class="a" style="left:1694.50px;top:233.50px" width="20" height="20" viewBox="0 0 20 20"><circle cx="7.8" cy="7.8" r="6.6" fill="none" stroke="#3b3a39" stroke-width="1.4"/><path d="M12.5 12.5 L18.5 18.5" stroke="#3b3a39" stroke-width="1.5"/></svg>
<div class="t" style="left:1723.20px;top:236.61px;font-size:17.00px;color:#605e5c;letter-spacing:0.088px">Search</div>
<div class="a" style="left:1897.30px;top:269.80px;width:10.70px;height:111.70px;background:#8a8886"></div>
<svg class="a" style="left:1692.50px;top:279.50px" width="10" height="16" viewBox="0 0 10 16"><path d="M1 0.8 L8 7.6 L1 14.5" fill="none" stroke="#605e5c" stroke-width="1.3"/></svg>
<svg class="a" style="left:1711.80px;top:278.80px" width="17" height="17" viewBox="0 0 17 17"><rect x="0.8" y="0.8" width="15.4" height="15.4" rx="3" fill="none" stroke="#3b3a39" stroke-width="1.6"/><path d="M5.7 0.8 V16.2 M11.1 0.8 V16.2 M0.8 5.7 H16.2 M0.8 11.1 H16.2" stroke="#3b3a39" stroke-width="1.3"/></svg>
<div class="t" style="left:1736.00px;top:280.58px;font-size:15.50px;color:#252423;letter-spacing:-0.076px">Ashishdata</div>
<svg class="a" style="left:1692.50px;top:311.57px" width="10" height="16" viewBox="0 0 10 16"><path d="M1 0.8 L8 7.6 L1 14.5" fill="none" stroke="#605e5c" stroke-width="1.3"/></svg>
<svg class="a" style="left:1711.80px;top:310.87px" width="17" height="17" viewBox="0 0 17 17"><rect x="0.8" y="0.8" width="15.4" height="15.4" rx="3" fill="none" stroke="#3b3a39" stroke-width="1.6"/><path d="M5.7 0.8 V16.2 M11.1 0.8 V16.2 M0.8 5.7 H16.2 M0.8 11.1 H16.2" stroke="#3b3a39" stroke-width="1.3"/></svg>
<div class="t" style="left:1736.00px;top:312.65px;font-size:15.50px;color:#252423;letter-spacing:-0.040px">Branch details</div>
<svg class="a" style="left:1692.50px;top:343.64px" width="10" height="16" viewBox="0 0 10 16"><path d="M1 0.8 L8 7.6 L1 14.5" fill="none" stroke="#605e5c" stroke-width="1.3"/></svg>
<svg class="a" style="left:1711.50px;top:342.94px" width="21" height="21" viewBox="0 0 21 21"><path d="M9 15.5 H3.5 C1.8 15.5 0.8 14.5 0.8 12.8 V3.5 C0.8 1.8 1.8 0.8 3.5 0.8 H12.5 C14.2 0.8 15.2 1.8 15.2 3.5 V5" fill="none" stroke="#3b3a39" stroke-width="1.5"/><path d="M5.6 0.8 V15.5 M10.6 0.8 V5.5 M0.8 5.6 H9.5 M0.8 10.6 H9.5" stroke="#3b3a39" stroke-width="1.2"/><rect x="10" y="5.8" width="9" height="12" rx="1" fill="#f3f2f1" stroke="#3b3a39" stroke-width="1.5"/><rect x="10" y="5.8" width="9" height="3" fill="#3b3a39"/><path d="M10 11.6 H19 M10 14.6 H19 M13 8.6 V17.8 M16 8.6 V17.8" stroke="#3b3a39" stroke-width="1.1"/></svg>
<div class="t" style="left:1736.00px;top:344.72px;font-size:15.50px;color:#252423;letter-spacing:-0.054px">Calculated Table</div>
<svg class="a" style="left:1692.50px;top:375.71px" width="10" height="16" viewBox="0 0 10 16"><path d="M1 0.8 L8 7.6 L1 14.5" fill="none" stroke="#605e5c" stroke-width="1.3"/></svg>
<svg class="a" style="left:1711.50px;top:375.01px" width="21" height="21" viewBox="0 0 21 21"><path d="M9 15.5 H3.5 C1.8 15.5 0.8 14.5 0.8 12.8 V3.5 C0.8 1.8 1.8 0.8 3.5 0.8 H12.5 C14.2 0.8 15.2 1.8 15.2 3.5 V5" fill="none" stroke="#3b3a39" stroke-width="1.5"/><path d="M5.6 0.8 V15.5 M10.6 0.8 V5.5 M0.8 5.6 H9.5 M0.8 10.6 H9.5" stroke="#3b3a39" stroke-width="1.2"/><rect x="10" y="5.8" width="9" height="12" rx="1" fill="#f3f2f1" stroke="#3b3a39" stroke-width="1.5"/><rect x="10" y="5.8" width="9" height="3" fill="#3b3a39"/><path d="M10 11.6 H19 M10 14.6 H19 M13 8.6 V17.8 M16 8.6 V17.8" stroke="#3b3a39" stroke-width="1.1"/></svg>
<div class="t" style="left:1736.00px;top:376.79px;font-size:15.50px;color:#252423;letter-spacing:-0.939px">Class</div>
<svg class="a" style="left:1690.00px;top:411.28px" width="17" height="10" viewBox="0 0 17 10"><path d="M1 1 L8.5 8.5 L16 1" fill="none" stroke="#605e5c" stroke-width="1.3"/></svg>
<svg class="a" style="left:1711.80px;top:407.08px" width="17" height="17" viewBox="0 0 17 17"><rect x="0.8" y="0.8" width="15.4" height="15.4" rx="3" fill="none" stroke="#3b3a39" stroke-width="1.6"/><path d="M5.7 0.8 V16.2 M11.1 0.8 V16.2 M0.8 5.7 H16.2 M0.8 11.1 H16.2" stroke="#3b3a39" stroke-width="1.3"/></svg>
<div class="a" style="left:1719.90px;top:415.48px;width:15.60px;height:15.60px;background:#117865;border-radius:50%"></div>
<svg class="a" style="left:1723.00px;top:419.58px" width="10" height="8" viewBox="0 0 10 8"><path d="M1 4 L4 7 L9 1.5" fill="none" stroke="#fff" stroke-width="1.4"/></svg>
<div class="t" style="left:1736.00px;top:408.86px;font-size:15.50px;color:#252423;letter-spacing:0.033px">Countries</div>
<div class="a" style="left:1731.40px;top:440.85px;width:15.60px;height:15.60px;border:1.2px solid #8a8886;border-radius:3px;background:#f8f8f8"></div>
<svg class="a" style="left:1759.50px;top:439.55px" width="14" height="18" viewBox="0 0 14 18"><path d="M13 1 H1.2 L7.3 8.5 L1.2 16 H13" fill="none" stroke="#3b3a39" stroke-width="1.4"/></svg>
<div class="t" style="left:1782.70px;top:440.93px;font-size:15.50px;color:#252423;letter-spacing:-0.073px">Area (sq km)</div>
<div class="a" style="left:1731.40px;top:472.92px;width:15.60px;height:15.60px;background:#117865;border-radius:3px"></div>
<svg class="a" style="left:1734.00px;top:476.22px" width="11" height="9" viewBox="0 0 11 9"><path d="M1 4.5 L4 7.5 L10 1.5" fill="none" stroke="#fff" stroke-width="1.5"/></svg>
<div class="t" style="left:1782.70px;top:473.00px;font-size:15.50px;color:#252423;letter-spacing:0.155px">Country</div>
<div class="a" style="left:1731.40px;top:504.99px;width:15.60px;height:15.60px;background:#117865;border-radius:3px"></div>
<svg class="a" style="left:1734.00px;top:508.29px" width="11" height="9" viewBox="0 0 11 9"><path d="M1 4.5 L4 7.5 L10 1.5" fill="none" stroke="#fff" stroke-width="1.5"/></svg>
<svg class="a" style="left:1759.50px;top:503.69px" width="14" height="18" viewBox="0 0 14 18"><path d="M13 1 H1.2 L7.3 8.5 L1.2 16 H13" fill="none" stroke="#3b3a39" stroke-width="1.4"/></svg>
<div class="t" style="left:1782.70px;top:505.07px;font-size:15.50px;color:#252423;letter-spacing:-0.172px">GDP (Billion U...</div>
<div class="a" style="left:1731.40px;top:537.06px;width:15.60px;height:15.60px;border:1.2px solid #8a8886;border-radius:3px;background:#f8f8f8"></div>
<svg class="a" style="left:1759.50px;top:535.76px" width="14" height="18" viewBox="0 0 14 18"><path d="M13 1 H1.2 L7.3 8.5 L1.2 16 H13" fill="none" stroke="#3b3a39" stroke-width="1.4"/></svg>
<div class="t" style="left:1782.70px;top:537.14px;font-size:15.50px;color:#252423;letter-spacing:-0.229px">Literacy Rate (...</div>
<div class="a" style="left:1731.40px;top:569.13px;width:15.60px;height:15.60px;border:1.2px solid #8a8886;border-radius:3px;background:#f8f8f8"></div>
<svg class="a" style="left:1759.50px;top:567.83px" width="14" height="18" viewBox="0 0 14 18"><path d="M13 1 H1.2 L7.3 8.5 L1.2 16 H13" fill="none" stroke="#3b3a39" stroke-width="1.4"/></svg>
<div class="t" style="left:1782.70px;top:569.21px;font-size:15.50px;color:#252423;letter-spacing:0.144px">Population (M...</div>
<div class="a" style="left:1731.40px;top:601.20px;width:15.60px;height:15.60px;border:1.2px solid #8a8886;border-radius:3px;background:#f8f8f8"></div>
<svg class="a" style="left:1759.50px;top:599.90px" width="14" height="18" viewBox="0 0 14 18"><path d="M13 1 H1.2 L7.3 8.5 L1.2 16 H13" fill="none" stroke="#3b3a39" stroke-width="1.4"/></svg>
<div class="t" style="left:1782.70px;top:601.28px;font-size:15.50px;color:#252423;letter-spacing:-0.872px">Year</div>
<svg class="a" style="left:1692.50px;top:632.27px" width="10" height="16" viewBox="0 0 10 16"><path d="M1 0.8 L8 7.6 L1 14.5" fill="none" stroke="#605e5c" stroke-width="1.3"/></svg>
<svg class="a" style="left:1711.50px;top:631.57px" width="21" height="21" viewBox="0 0 21 21"><path d="M9 15.5 H3.5 C1.8 15.5 0.8 14.5 0.8 12.8 V3.5 C0.8 1.8 1.8 0.8 3.5 0.8 H12.5 C14.2 0.8 15.2 1.8 15.2 3.5 V5" fill="none" stroke="#3b3a39" stroke-width="1.5"/><path d="M5.6 0.8 V15.5 M10.6 0.8 V5.5 M0.8 5.6 H9.5 M0.8 10.6 H9.5" stroke="#3b3a39" stroke-width="1.2"/><rect x="10" y="5.8" width="9" height="12" rx="1" fill="#f3f2f1" stroke="#3b3a39" stroke-width="1.5"/><rect x="10" y="5.8" width="9" height="3" fill="#3b3a39"/><path d="M10 11.6 H19 M10 14.6 H19 M13 8.6 V17.8 M16 8.6 V17.8" stroke="#3b3a39" stroke-width="1.1"/></svg>
<div class="t" style="left:1736.00px;top:633.35px;font-size:15.50px;color:#252423;letter-spacing:-0.030px">Countries Average T...</div>
<svg class="a" style="left:1692.50px;top:664.34px" width="10" height="16" viewBox="0 0 10 16"><path d="M1 0.8 L8 7.6 L1 14.5" fill="none" stroke="#605e5c" stroke-width="1.3"/></svg>
<svg class="a" style="left:1711.80px;top:663.64px" width="17" height="17" viewBox="0 0 17 17"><rect x="0.8" y="0.8" width="15.4" height="15.4" rx="3" fill="none" stroke="#3b3a39" stroke-width="1.6"/><path d="M5.7 0.8 V16.2 M11.1 0.8 V16.2 M0.8 5.7 H16.2 M0.8 11.1 H16.2" stroke="#3b3a39" stroke-width="1.3"/></svg>
<div class="t" style="left:1736.00px;top:665.42px;font-size:15.50px;color:#252423;letter-spacing:0.219px">Countrylist</div>
<svg class="a" style="left:1692.50px;top:696.41px" width="10" height="16" viewBox="0 0 10 16"><path d="M1 0.8 L8 7.6 L1 14.5" fill="none" stroke="#605e5c" stroke-width="1.3"/></svg>
<svg class="a" style="left:1711.80px;top:695.71px" width="17" height="17" viewBox="0 0 17 17"><rect x="0.8" y="0.8" width="15.4" height="15.4" rx="3" fill="none" stroke="#3b3a39" stroke-width="1.6"/><path d="M5.7 0.8 V16.2 M11.1 0.8 V16.2 M0.8 5.7 H16.2 M0.8 11.1 H16.2" stroke="#3b3a39" stroke-width="1.3"/></svg>
<div class="t" style="left:1736.00px;top:697.49px;font-size:15.50px;color:#252423;letter-spacing:-0.116px">Customers</div>
<svg class="a" style="left:1692.50px;top:728.48px" width="10" height="16" viewBox="0 0 10 16"><path d="M1 0.8 L8 7.6 L1 14.5" fill="none" stroke="#605e5c" stroke-width="1.3"/></svg>
<svg class="a" style="left:1711.80px;top:727.78px" width="17" height="17" viewBox="0 0 17 17"><rect x="0.8" y="0.8" width="15.4" height="15.4" rx="3" fill="none" stroke="#3b3a39" stroke-width="1.6"/><path d="M5.7 0.8 V16.2 M11.1 0.8 V16.2 M0.8 5.7 H16.2 M0.8 11.1 H16.2" stroke="#3b3a39" stroke-width="1.3"/></svg>
<div class="t" style="left:1736.00px;top:729.56px;font-size:15.50px;color:#252423;letter-spacing:-0.056px">CustomersData</div>
<svg class="a" style="left:1692.50px;top:760.55px" width="10" height="16" viewBox="0 0 10 16"><path d="M1 0.8 L8 7.6 L1 14.5" fill="none" stroke="#605e5c" stroke-width="1.3"/></svg>
<svg class="a" style="left:1711.80px;top:759.85px" width="17" height="17" viewBox="0 0 17 17"><rect x="0.8" y="0.8" width="15.4" height="15.4" rx="3" fill="none" stroke="#3b3a39" stroke-width="1.6"/><path d="M5.7 0.8 V16.2 M11.1 0.8 V16.2 M0.8 5.7 H16.2 M0.8 11.1 H16.2" stroke="#3b3a39" stroke-width="1.3"/></svg>
<div class="t" style="left:1736.00px;top:761.63px;font-size:15.50px;color:#252423;letter-spacing:-0.265px">Data1</div>
<svg class="a" style="left:1692.50px;top:792.62px" width="10" height="16" viewBox="0 0 10 16"><path d="M1 0.8 L8 7.6 L1 14.5" fill="none" stroke="#605e5c" stroke-width="1.3"/></svg>
<svg class="a" style="left:1711.80px;top:791.92px" width="17" height="17" viewBox="0 0 17 17"><rect x="0.8" y="0.8" width="15.4" height="15.4" rx="3" fill="none" stroke="#3b3a39" stroke-width="1.6"/><path d="M5.7 0.8 V16.2 M11.1 0.8 V16.2 M0.8 5.7 H16.2 M0.8 11.1 H16.2" stroke="#3b3a39" stroke-width="1.3"/></svg>
<div class="t" style="left:1736.00px;top:793.70px;font-size:15.50px;color:#252423;letter-spacing:-0.265px">Data2</div>
<svg class="a" style="left:1692.50px;top:824.69px" width="10" height="16" viewBox="0 0 10 16"><path d="M1 0.8 L8 7.6 L1 14.5" fill="none" stroke="#605e5c" stroke-width="1.3"/></svg>
<svg class="a" style="left:1711.50px;top:823.99px" width="21" height="21" viewBox="0 0 21 21"><path d="M9 15.5 H3.5 C1.8 15.5 0.8 14.5 0.8 12.8 V3.5 C0.8 1.8 1.8 0.8 3.5 0.8 H12.5 C14.2 0.8 15.2 1.8 15.2 3.5 V5" fill="none" stroke="#3b3a39" stroke-width="1.5"/><path d="M5.6 0.8 V15.5 M10.6 0.8 V5.5 M0.8 5.6 H9.5 M0.8 10.6 H9.5" stroke="#3b3a39" stroke-width="1.2"/><rect x="10" y="5.8" width="9" height="12" rx="1" fill="#f3f2f1" stroke="#3b3a39" stroke-width="1.5"/><rect x="10" y="5.8" width="9" height="3" fill="#3b3a39"/><path d="M10 11.6 H19 M10 14.6 H19 M13 8.6 V17.8 M16 8.6 V17.8" stroke="#3b3a39" stroke-width="1.1"/></svg>
<div class="t" style="left:1736.00px;top:825.77px;font-size:15.50px;color:#252423;letter-spacing:-0.815px">DATESBETWEEN Table</div>
<svg class="a" style="left:1692.50px;top:856.76px" width="10" height="16" viewBox="0 0 10 16"><path d="M1 0.8 L8 7.6 L1 14.5" fill="none" stroke="#605e5c" stroke-width="1.3"/></svg>
<svg class="a" style="left:1711.50px;top:856.06px" width="21" height="21" viewBox="0 0 21 21"><path d="M9 15.5 H3.5 C1.8 15.5 0.8 14.5 0.8 12.8 V3.5 C0.8 1.8 1.8 0.8 3.5 0.8 H12.5 C14.2 0.8 15.2 1.8 15.2 3.5 V5" fill="none" stroke="#3b3a39" stroke-width="1.5"/><path d="M5.6 0.8 V15.5 M10.6 0.8 V5.5 M0.8 5.6 H9.5 M0.8 10.6 H9.5" stroke="#3b3a39" stroke-width="1.2"/><rect x="10" y="5.8" width="9" height="12" rx="1" fill="#f3f2f1" stroke="#3b3a39" stroke-width="1.5"/><rect x="10" y="5.8" width="9" height="3" fill="#3b3a39"/><path d="M10 11.6 H19 M10 14.6 H19 M13 8.6 V17.8 M16 8.6 V17.8" stroke="#3b3a39" stroke-width="1.1"/></svg>
<div class="t" style="left:1736.00px;top:857.84px;font-size:15.50px;color:#252423;letter-spacing:-0.618px">DATESINPERIOD Table</div>
<svg class="a" style="left:1692.50px;top:888.83px" width="10" height="16" viewBox="0 0 10 16"><path d="M1 0.8 L8 7.6 L1 14.5" fill="none" stroke="#605e5c" stroke-width="1.3"/></svg>
<svg class="a" style="left:1711.50px;top:888.13px" width="21" height="21" viewBox="0 0 21 21"><path d="M9 15.5 H3.5 C1.8 15.5 0.8 14.5 0.8 12.8 V3.5 C0.8 1.8 1.8 0.8 3.5 0.8 H12.5 C14.2 0.8 15.2 1.8 15.2 3.5 V5" fill="none" stroke="#3b3a39" stroke-width="1.5"/><path d="M5.6 0.8 V15.5 M10.6 0.8 V5.5 M0.8 5.6 H9.5 M0.8 10.6 H9.5" stroke="#3b3a39" stroke-width="1.2"/><rect x="10" y="5.8" width="9" height="12" rx="1" fill="#f3f2f1" stroke="#3b3a39" stroke-width="1.5"/><rect x="10" y="5.8" width="9" height="3" fill="#3b3a39"/><path d="M10 11.6 H19 M10 14.6 H19 M13 8.6 V17.8 M16 8.6 V17.8" stroke="#3b3a39" stroke-width="1.1"/></svg>
<div class="t" style="left:1736.00px;top:889.91px;font-size:15.50px;color:#252423;letter-spacing:-0.475px">DATESMTD Table</div>
<svg class="a" style="left:1692.50px;top:920.90px" width="10" height="16" viewBox="0 0 10 16"><path d="M1 0.8 L8 7.6 L1 14.5" fill="none" stroke="#605e5c" stroke-width="1.3"/></svg>
<svg class="a" style="left:1711.80px;top:920.20px" width="17" height="17" viewBox="0 0 17 17"><rect x="0.8" y="0.8" width="15.4" height="15.4" rx="3" fill="none" stroke="#3b3a39" stroke-width="1.6"/><path d="M5.7 0.8 V16.2 M11.1 0.8 V16.2 M0.8 5.7 H16.2 M0.8 11.1 H16.2" stroke="#3b3a39" stroke-width="1.3"/></svg>
<div class="t" style="left:1736.00px;top:921.98px;font-size:15.50px;color:#252423;letter-spacing:1.074px">df</div>
<svg class="a" style="left:1692.50px;top:952.97px" width="10" height="16" viewBox="0 0 10 16"><path d="M1 0.8 L8 7.6 L1 14.5" fill="none" stroke="#605e5c" stroke-width="1.3"/></svg>
<svg class="a" style="left:1711.50px;top:952.27px" width="21" height="21" viewBox="0 0 21 21"><path d="M9 15.5 H3.5 C1.8 15.5 0.8 14.5 0.8 12.8 V3.5 C0.8 1.8 1.8 0.8 3.5 0.8 H12.5 C14.2 0.8 15.2 1.8 15.2 3.5 V5" fill="none" stroke="#3b3a39" stroke-width="1.5"/><path d="M5.6 0.8 V15.5 M10.6 0.8 V5.5 M0.8 5.6 H9.5 M0.8 10.6 H9.5" stroke="#3b3a39" stroke-width="1.2"/><rect x="10" y="5.8" width="9" height="12" rx="1" fill="#f3f2f1" stroke="#3b3a39" stroke-width="1.5"/><rect x="10" y="5.8" width="9" height="3" fill="#3b3a39"/><path d="M10 11.6 H19 M10 14.6 H19 M13 8.6 V17.8 M16 8.6 V17.8" stroke="#3b3a39" stroke-width="1.1"/></svg>
<div class="t" style="left:1736.00px;top:954.05px;font-size:15.50px;color:#252423;letter-spacing:-0.441px">DISTINCT Values Table</div>
<div class="a" style="left:0.00px;top:166.00px;width:1918.00px;height:6.00px;background:linear-gradient(rgba(0,0,0,0.10),rgba(0,0,0,0))"></div>
</body></html>
